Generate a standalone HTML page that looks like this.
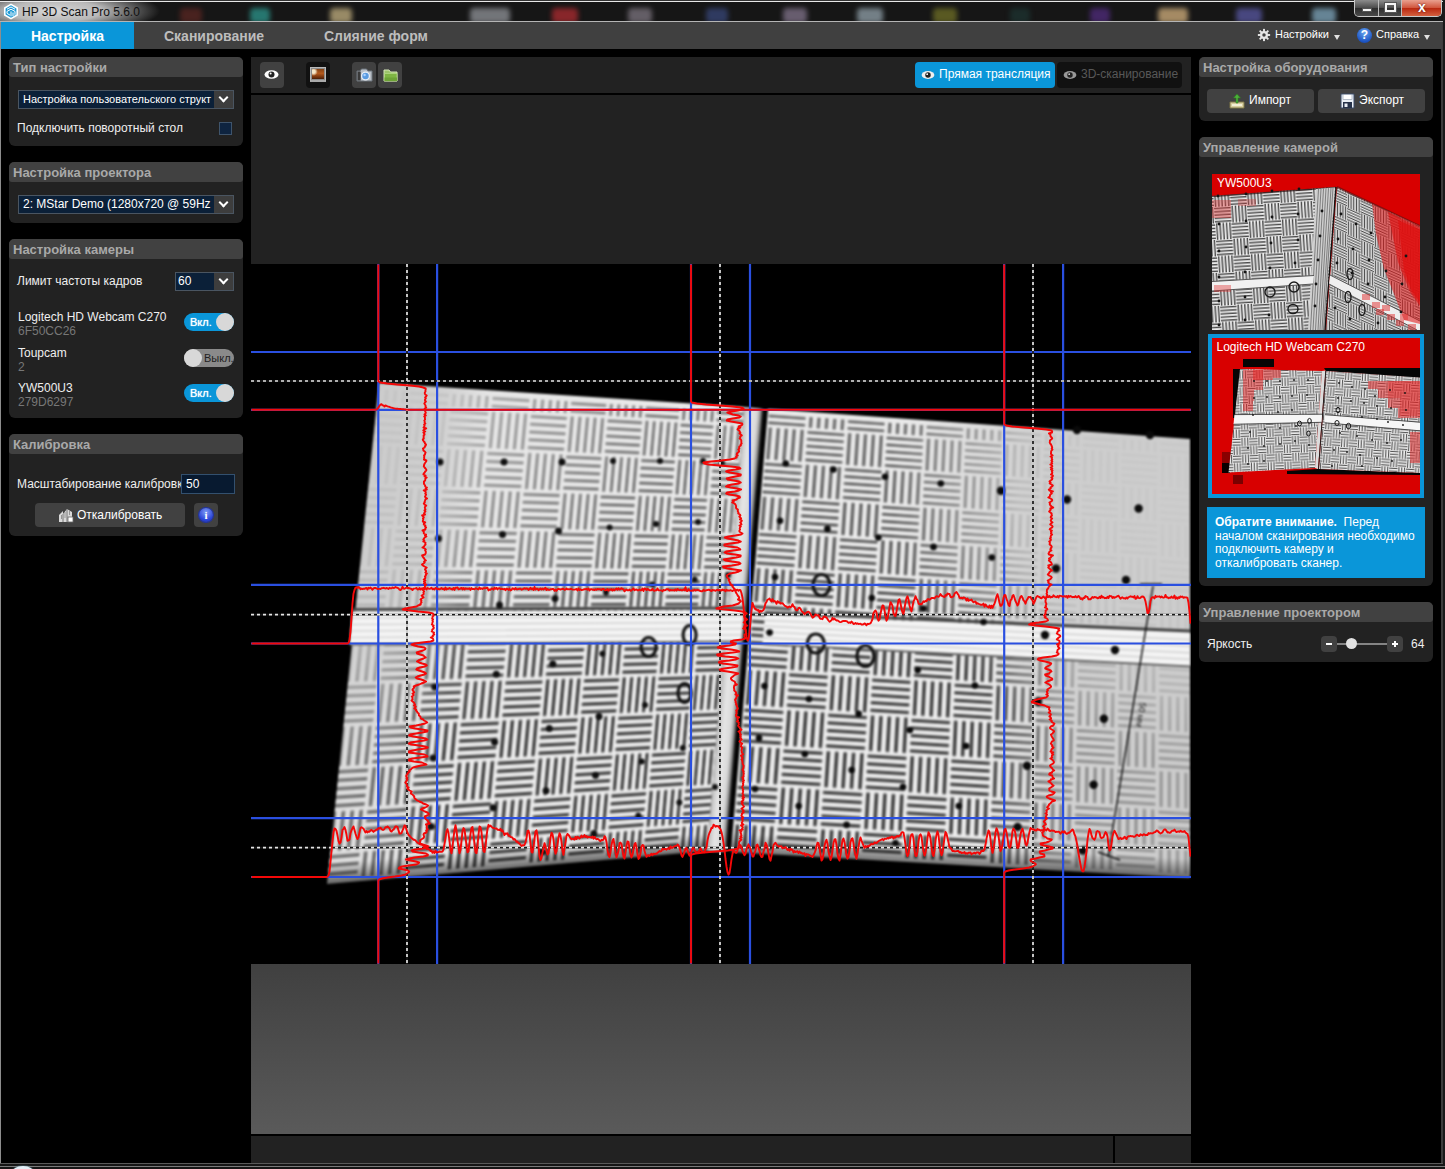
<!DOCTYPE html>
<html lang="ru"><head><meta charset="utf-8"><title>HP 3D Scan Pro 5.6.0</title>
<style>
*{box-sizing:border-box}
html,body{margin:0;padding:0;background:#000}
body{width:1445px;height:1169px;position:relative;overflow:hidden;font:12px "Liberation Sans",sans-serif;color:#eee}
.abs{position:absolute}
#title{left:0;top:0;width:1445px;height:22px;background:#161616;overflow:hidden}
#title .blob{position:absolute;top:8px;height:15px;border-radius:4px;filter:blur(2.500px);opacity:.8}
#tabs{left:1px;top:22px;width:1441px;height:27px;background:#404040}
.tab{position:absolute;top:0;height:27px;font:bold 14px/29px "Liberation Sans",sans-serif;color:#bdbdbd;white-space:nowrap}
.tab.on{background:#0a96d9;color:#fff}
.ph{position:absolute;height:20px;background:#414141;border-radius:5px 5px 3px 3px;font:bold 13px/21px "Liberation Sans",sans-serif;color:#a9a9a9;padding-left:4px;white-space:nowrap}
.pb{position:absolute;background:#222;border-radius:0 0 6px 6px}
.t{position:absolute;white-space:nowrap;line-height:14px;color:#efefef}
.g{color:#777}
.sel{position:absolute;height:19px;background:#0b2038;border:1px solid #4a5561;font-size:11px;line-height:16px;color:#fff;padding-left:4px;white-space:nowrap;overflow:hidden}
.sel .arr{position:absolute;right:0;top:0;width:19px;height:17px;background:#3d3d3d}
.sel .arr:after{content:"";position:absolute;left:6px;top:3px;width:5px;height:5px;border-right:2px solid #fff;border-bottom:2px solid #fff;transform:rotate(45deg)}
.tog{position:absolute;width:50px;height:18px;border-radius:9px;font-size:11px;line-height:18px}
.tog.on{background:#0a96d9;color:#fff;text-shadow:0 0 1px #fff}
.tog.off{background:#8a8a8a;color:#222}
.tog i{position:absolute;top:0;width:18px;height:18px;border-radius:9px;background:#d8d8d8}
.btn{position:absolute;background:#414141;border-radius:4px;color:#fff;white-space:nowrap;line-height:24px}
</style></head><body>
<!-- title bar -->
<div id="title" class="abs">
 <div class="abs" style="left:-50px;top:-12px;width:210px;height:46px;background:radial-gradient(ellipse closest-side at center,rgba(235,235,235,.9) 0%,rgba(225,225,225,.8) 45%,rgba(200,200,200,.45) 72%,rgba(128,128,128,0) 100%);"></div>
 <div class="blob" style="left:180px;width:22px;background:#6b2a25;opacity:.6"></div>
 <div class="blob" style="left:250px;width:20px;background:#2b8f86"></div>
 <div class="blob" style="left:330px;width:22px;background:#b9a77a"></div>
 <div class="blob" style="left:470px;width:40px;background:#8a8d92"></div>
 <div class="blob" style="left:552px;width:26px;background:#a52a2f"></div>
 <div class="blob" style="left:628px;width:24px;background:#77707a"></div>
 <div class="blob" style="left:706px;width:22px;background:#3a4a80;opacity:.7"></div>
 <div class="blob" style="left:783px;width:24px;background:#7c6f85"></div>
 <div class="blob" style="left:857px;width:26px;background:#8b9aa3"></div>
 <div class="blob" style="left:933px;width:24px;background:#6a6a25"></div>
 <div class="blob" style="left:1010px;width:20px;background:#1f3b38;opacity:.6"></div>
 <div class="blob" style="left:1090px;width:20px;background:#4d2a78"></div>
 <div class="blob" style="left:1158px;width:30px;background:#c9a878"></div>
 <div class="blob" style="left:1236px;width:26px;background:#55549a"></div>
 <div class="blob" style="left:1312px;width:24px;background:#7aa0b5"></div>
 <div class="abs" style="left:0;top:1px;width:1445px;height:1px;background:#e8e8e8"></div>
 <div class="abs" style="left:0;top:0;width:1445px;height:1px;background:#333"></div>
 <div class="abs" style="left:0;top:21px;width:1443px;height:1px;background:#b5b5b5"></div>
 <svg class="abs" style="left:3px;top:3px" width="16" height="17" viewBox="0 0 16 17"><path d="M8 .5 15 4.5v8L8 16.5 1 12.500v-8z" fill="#fff"/><path d="M8 2.300 13.400 5.400v6.200L8 14.700 2.600 11.600V5.400z" fill="#1c9ad6"/><path d="M4 6.200 8 4l4 2.200M4 8.400 8 6.200l4 2.200M8 8.400v5M10 9.500v3.500M12 8.400v3.400M4 8.400v2l3 1.700" stroke="#fff" stroke-width="1" fill="none"/></svg>
 <div class="t" style="left:22px;top:5px;color:#111;font-size:12px">HP 3D Scan Pro 5.6.0</div>
 <!-- window controls -->
 <div class="abs" style="left:1354px;top:0;width:88px;height:17px;border:1px solid #c9c9c9;border-top:none;border-radius:0 0 5px 5px;overflow:hidden;background:#555">
  <div class="abs" style="left:0;top:0;width:24px;height:16px;background:linear-gradient(#8c8c8c,#4a4a4a 50%,#2d2d2d 51%,#4a4a4a);border-right:1px solid #bbb"></div>
  <div class="abs" style="left:24px;top:0;width:23px;height:16px;background:linear-gradient(#8c8c8c,#4a4a4a 50%,#2d2d2d 51%,#4a4a4a);border-right:1px solid #bbb"></div>
  <div class="abs" style="left:47px;top:0;width:40px;height:16px;background:linear-gradient(#e9a08f,#d0533a 50%,#b8270f 51%,#d4603f)"></div>
  <div class="abs" style="left:7px;top:8px;width:10px;height:4px;background:#f4f4f4;border:1px solid #555"></div>
  <div class="abs" style="left:30px;top:3px;width:11px;height:9px;border:2px solid #f4f4f4;outline:1px solid #555"></div>
  <div class="abs" style="left:47px;top:-1px;width:40px;text-align:center;font:bold 14px/17px 'Liberation Sans',sans-serif;color:#fff;text-shadow:0 0 2px #400">x</div>
 </div>
</div>
<!-- window side borders -->
<div class="abs" style="left:0;top:22px;width:1px;height:1142px;background:#8d8d8d"></div>
<div class="abs" style="left:1441px;top:22px;width:2px;height:1141px;background:#3c3c3c"></div>
<div class="abs" style="left:1443px;top:0;width:2px;height:1169px;background:#1a1a1a"></div>
<div class="abs" style="left:0;top:1163px;width:1445px;height:6px;background:#161616"></div>
<div class="abs" style="left:0;top:1163px;width:1443px;height:1px;background:#5a5a5a"></div>
<div class="abs" style="left:0;top:1166px;width:1445px;height:1px;background:#7a7a7a"></div>
<div class="abs" style="left:12px;top:1166px;width:22px;height:14px;border-radius:50%;background:#e4eef6;box-shadow:0 0 2px #7ab"></div>
<!-- tab bar -->
<div id="tabs" class="abs">
 <div class="tab on" style="left:0;width:133px;text-align:center">Настройка</div>
 <div class="tab" style="left:163px">Сканирование</div>
 <div class="tab" style="left:323px">Слияние форм</div>
 <svg class="abs" style="left:1256px;top:6px" width="14" height="14" viewBox="0 0 16 16"><g fill="#e6e6e6"><circle cx="8" cy="8" r="4.600"/><g id="tt"><rect x="6.900" y="1" width="2.200" height="14"/><rect x="1" y="6.900" width="14" height="2.200"/></g><use href="#tt" transform="rotate(45 8 8)"/></g><circle cx="8" cy="8" r="2" fill="#404040"/></svg>
 <div class="t" style="left:1274px;top:5px;font-size:11px;color:#fff">Настройки</div>
 <div class="abs" style="left:1333px;top:13px;border:3.500px solid transparent;border-top:5px solid #e0e0e0;border-bottom:none"></div>
 <div class="abs" style="left:1356px;top:6px;width:15px;height:15px;border-radius:50%;background:radial-gradient(circle at 50% 30%,#6aa6ef,#1d55c4 70%,#16409a);color:#fff;font:bold 12px/15px 'Liberation Sans',sans-serif;text-align:center">?</div>
 <div class="t" style="left:1375px;top:5px;font-size:11px;color:#fff">Справка</div>
 <div class="abs" style="left:1423px;top:13px;border:3.500px solid transparent;border-top:5px solid #e0e0e0;border-bottom:none"></div>
</div>
<!-- LEFT PANELS -->
<div class="pb" style="left:9px;top:60px;width:234px;height:86px"></div>
<div class="ph" style="left:9px;top:57px;width:234px">Тип настройки</div>
<div class="sel" style="left:18px;top:90px;width:216px">Настройка пользовательского структ<span class="arr"></span></div>
<div class="t" style="left:17px;top:121px">Подключить поворотный стол</div>
<div class="abs" style="left:219px;top:122px;width:13px;height:13px;background:#0e2440;border:1px solid #3f546b"></div>

<div class="pb" style="left:9px;top:165px;width:234px;height:58px"></div>
<div class="ph" style="left:9px;top:162px;width:234px">Настройка проектора</div>
<div class="sel" style="left:18px;top:195px;width:216px;font-size:12px">2: MStar Demo (1280x720 @ 59Hz<span class="arr"></span></div>

<div class="pb" style="left:9px;top:242px;width:234px;height:176px"></div>
<div class="ph" style="left:9px;top:239px;width:234px">Настройка камеры</div>
<div class="t" style="left:17px;top:274px">Лимит частоты кадров</div>
<div class="sel" style="left:175px;top:272px;width:59px;font-size:12px;padding-left:2px">60<span class="arr"></span></div>
<div class="t" style="left:18px;top:310px">Logitech HD Webcam C270</div>
<div class="t g" style="left:18px;top:324px">6F50CC26</div>
<div class="tog on" style="left:184px;top:313px;padding-left:6px">Вкл.<i style="right:0"></i></div>
<div class="t" style="left:18px;top:346px">Toupcam</div>
<div class="t g" style="left:18px;top:360px">2</div>
<div class="tog off" style="left:184px;top:349px;padding-left:20px">Выкл.<i style="left:0"></i></div>
<div class="t" style="left:18px;top:381px">YW500U3</div>
<div class="t g" style="left:18px;top:395px">279D6297</div>
<div class="tog on" style="left:184px;top:384px;padding-left:6px">Вкл.<i style="right:0"></i></div>

<div class="pb" style="left:9px;top:437px;width:234px;height:99px"></div>
<div class="ph" style="left:9px;top:434px;width:234px">Калибровка</div>
<div class="t" style="left:17px;top:477px;width:164px;overflow:hidden">Масштабирование калибровки</div>
<div class="sel" style="left:181px;top:474px;width:54px;height:20px;font-size:12px;line-height:18px;background:#081a30;border-color:#33506e">50</div>
<div class="btn" style="left:35px;top:503px;width:150px;height:24px;padding-left:42px">Откалибровать
 <svg class="abs" style="left:22px;top:4px" width="18" height="17" viewBox="0 0 18 17"><path d="M2 15V8l4-4v3l4-5 5 3v10z" fill="#d9d9d9"/><path d="M6 7v8M10 2v13" stroke="#777" stroke-width="1"/><rect x="11" y="10" width="5" height="5" fill="#fff" stroke="#666" stroke-width=".8"/><path d="M4 9h1M4 11h1M7.500 6h1M7.500 8h1M7.500 10h1M12 5h1M12 7h1" stroke="#555" stroke-width="1.200"/></svg>
</div>
<div class="btn" style="left:194px;top:503px;width:24px;height:24px"><div class="abs" style="left:5px;top:5px;width:14px;height:14px;border-radius:50%;background:radial-gradient(circle at 50% 30%,#7f9cf5,#2a44d8 65%,#1a2ca8);color:#fff;font:bold 11px/14px 'Liberation Serif',serif;text-align:center;box-shadow:0 0 0 1px #2233a0">i</div></div>
<!-- RIGHT PANELS -->
<div class="pb" style="left:1199px;top:60px;width:234px;height:61px"></div>
<div class="ph" style="left:1199px;top:57px;width:234px">Настройка оборудования</div>
<div class="btn" style="left:1207px;top:89px;width:107px;height:24px;padding-left:42px;line-height:22px">Импорт
 <svg class="abs" style="left:22px;top:4px" width="16" height="16" viewBox="0 0 16 16"><path d="M1 9h14v6H1z" fill="#d8cfa0" stroke="#7d7446" stroke-width="1"/><path d="M8 1 4.500 5H7v5h2V5h2.500z" fill="#4caf3a" stroke="#2c7a20" stroke-width=".6"/><rect x="3" y="11" width="10" height="2" fill="#f3efd5"/></svg>
</div>
<div class="btn" style="left:1318px;top:89px;width:107px;height:24px;padding-left:41px;line-height:22px">Экспорт
 <svg class="abs" style="left:22px;top:4px" width="15" height="16" viewBox="0 0 15 16"><path d="M1 1h13v14H1z" fill="#e9eef5" stroke="#3a4a66" stroke-width="1"/><rect x="3" y="1.500" width="9" height="5" fill="#fff" stroke="#8894a8" stroke-width=".6"/><rect x="3" y="9" width="9" height="6" fill="#26324a"/><rect x="4.500" y="10.500" width="3" height="3.500" fill="#e9eef5"/></svg>
</div>

<div class="pb" style="left:1199px;top:140px;width:234px;height:446px"></div>
<div class="ph" style="left:1199px;top:137px;width:234px">Управление камерой</div>
<svg class="abs" style="left:1212px;top:174px" width="208" height="156" viewBox="0 0 208 156"><defs>
<pattern id="t1a" patternUnits="userSpaceOnUse" width="33.0" height="33.0" patternTransform="rotate(-3.5)"><rect width="33.0" height="33.0" fill="#ececec"/><g fill="#4a4a4a"><rect x="0" y="0.92" width="16.5" height="1.45"/><rect x="16.5" y="17.43" width="16.5" height="1.45"/><rect x="17.43" y="0" width="1.45" height="16.5"/><rect x="0.92" y="16.5" width="1.45" height="16.5"/><rect x="0" y="4.22" width="16.5" height="1.45"/><rect x="16.5" y="20.73" width="16.5" height="1.45"/><rect x="20.73" y="0" width="1.45" height="16.5"/><rect x="4.22" y="16.5" width="1.45" height="16.5"/><rect x="0" y="7.52" width="16.5" height="1.45"/><rect x="16.5" y="24.02" width="16.5" height="1.45"/><rect x="24.02" y="0" width="1.45" height="16.5"/><rect x="7.52" y="16.5" width="1.45" height="16.5"/><rect x="0" y="10.82" width="16.5" height="1.45"/><rect x="16.5" y="27.32" width="16.5" height="1.45"/><rect x="27.32" y="0" width="1.45" height="16.5"/><rect x="10.82" y="16.5" width="1.45" height="16.5"/><rect x="0" y="14.12" width="16.5" height="1.45"/><rect x="16.5" y="30.62" width="16.5" height="1.45"/><rect x="30.62" y="0" width="1.45" height="16.5"/><rect x="14.12" y="16.5" width="1.45" height="16.5"/></g></pattern>
<pattern id="t1b" patternUnits="userSpaceOnUse" width="27.0" height="27.0" patternTransform="skewY(24)"><rect width="27.0" height="27.0" fill="#ececec"/><g fill="#4a4a4a"><rect x="0" y="0.75" width="13.5" height="1.2"/><rect x="13.5" y="14.25" width="13.5" height="1.2"/><rect x="14.25" y="0" width="1.2" height="13.5"/><rect x="0.75" y="13.5" width="1.2" height="13.5"/><rect x="0" y="3.45" width="13.5" height="1.2"/><rect x="13.5" y="16.95" width="13.5" height="1.2"/><rect x="16.95" y="0" width="1.2" height="13.5"/><rect x="3.45" y="13.5" width="1.2" height="13.5"/><rect x="0" y="6.15" width="13.5" height="1.2"/><rect x="13.5" y="19.65" width="13.5" height="1.2"/><rect x="19.65" y="0" width="1.2" height="13.5"/><rect x="6.15" y="13.5" width="1.2" height="13.5"/><rect x="0" y="8.85" width="13.5" height="1.2"/><rect x="13.5" y="22.35" width="13.5" height="1.2"/><rect x="22.35" y="0" width="1.2" height="13.5"/><rect x="8.85" y="13.5" width="1.2" height="13.5"/><rect x="0" y="11.55" width="13.5" height="1.2"/><rect x="13.5" y="25.05" width="13.5" height="1.2"/><rect x="25.05" y="0" width="1.2" height="13.5"/><rect x="11.55" y="13.5" width="1.2" height="13.5"/></g></pattern>
</defs>
<rect width="208" height="156" fill="#d80000"/>
<polygon points="0,22 124,13 113,156 0,156" fill="url(#t1a)"/>
<polygon points="125,13 208,52 208,156 114,156" fill="url(#t1b)"/>
<path d="M0 22.500 124 13.500" stroke="#2b1010" stroke-width="1.500" opacity=".7"/><path d="M125 13 208 52" stroke="#5a1010" stroke-width="2" opacity=".6"/>
<polygon points="104,15 123,13.500 112,156 96,156" fill="#cfcfcf"/><path d="M106.500 15 98.500 156M109 15 101 156M111.500 14.700 103.500 156M114 14.500 106 156M116.500 14.200 108 156M119 14 110 156M121 14 111.500 156" stroke="#6a6a6a" stroke-width=".8"/>
<path d="M124 13 113 156" stroke="#111" stroke-width="1.300"/>
<polygon points="0,107.500 102,101.500 101,110 0,117" fill="#f1f1f1"/><path d="M0 107.500 102 101.500M0 117 101 110" stroke="#555" stroke-width="1"/>
<polygon points="118,101 208,147 208,156 205,156 117,110" fill="#eee"/><path d="M118 101 208 147M117 110 205 156" stroke="#555" stroke-width="1"/>
<polygon points="160,30 208,52 208,150 192,146 182,120 172,95 164,60" fill="#e01010" opacity=".55"/>
<polygon points="176,38 208,54 208,132 198,118 186,88" fill="#e01010" opacity=".62"/>
<polygon points="186,46 208,56 208,128 200,118 192,96" fill="#e01010" opacity=".7"/>
<rect x="0" y="26" width="19" height="18" fill="#e03030" opacity=".4"/><rect x="26" y="25" width="18" height="7" fill="#e03030" opacity=".3"/><rect x="2" y="111" width="17" height="7" fill="#e03030" opacity=".4"/>
<rect x="150" y="120" width="8" height="6" fill="#e03030" opacity=".5"/>
<rect x="160" y="128" width="8" height="6" fill="#e03030" opacity=".5"/>
<rect x="164" y="135" width="8" height="6" fill="#e03030" opacity=".5"/>
<rect x="175" y="140" width="8" height="6" fill="#e03030" opacity=".5"/>
<rect x="184" y="146" width="8" height="6" fill="#e03030" opacity=".5"/>
<rect x="196" y="150" width="8" height="6" fill="#e03030" opacity=".5"/>
<rect x="170" y="131" width="8" height="6" fill="#e03030" opacity=".5"/>
<rect x="188" y="140" width="8" height="6" fill="#e03030" opacity=".5"/>
<circle cx="6" cy="22" r="1.400" fill="#151515"/>
<circle cx="34" cy="20" r="1.400" fill="#151515"/>
<circle cx="60" cy="17" r="1.400" fill="#151515"/>
<circle cx="87" cy="15" r="1.400" fill="#151515"/>
<circle cx="7" cy="50" r="1.400" fill="#151515"/>
<circle cx="34" cy="47" r="1.400" fill="#151515"/>
<circle cx="60" cy="43" r="1.400" fill="#151515"/>
<circle cx="86" cy="40" r="1.400" fill="#151515"/>
<circle cx="7" cy="77" r="1.400" fill="#151515"/>
<circle cx="34" cy="73" r="1.400" fill="#151515"/>
<circle cx="59" cy="69" r="1.400" fill="#151515"/>
<circle cx="86" cy="66" r="1.400" fill="#151515"/>
<circle cx="7" cy="103" r="1.400" fill="#151515"/>
<circle cx="33" cy="98" r="1.400" fill="#151515"/>
<circle cx="58" cy="94" r="1.400" fill="#151515"/>
<circle cx="83" cy="89" r="1.400" fill="#151515"/>
<circle cx="7" cy="127" r="1.400" fill="#151515"/>
<circle cx="33" cy="123" r="1.400" fill="#151515"/>
<circle cx="7" cy="151" r="1.400" fill="#151515"/>
<circle cx="33" cy="146" r="1.400" fill="#151515"/>
<circle cx="57" cy="141" r="1.400" fill="#151515"/>
<circle cx="110" cy="37" r="1.400" fill="#151515"/>
<circle cx="108" cy="62" r="1.400" fill="#151515"/>
<circle cx="106" cy="86" r="1.400" fill="#151515"/>
<circle cx="104" cy="110" r="1.400" fill="#151515"/>
<circle cx="103" cy="132" r="1.400" fill="#151515"/>
<circle cx="129" cy="40" r="1.400" fill="#151515"/>
<circle cx="144" cy="50" r="1.400" fill="#151515"/>
<circle cx="159" cy="59" r="1.400" fill="#151515"/>
<circle cx="126" cy="65" r="1.400" fill="#151515"/>
<circle cx="141" cy="75" r="1.400" fill="#151515"/>
<circle cx="157" cy="86" r="1.400" fill="#151515"/>
<circle cx="174" cy="97" r="1.400" fill="#151515"/>
<circle cx="194" cy="82" r="1.400" fill="#151515"/>
<circle cx="125" cy="89" r="1.400" fill="#151515"/>
<circle cx="140" cy="99" r="1.400" fill="#151515"/>
<circle cx="156" cy="110" r="1.400" fill="#151515"/>
<circle cx="173" cy="123" r="1.400" fill="#151515"/>
<circle cx="190" cy="110" r="1.400" fill="#151515"/>
<circle cx="123" cy="134" r="1.400" fill="#151515"/>
<circle cx="138" cy="145" r="1.400" fill="#151515"/>
<circle cx="166" cy="149" r="1.400" fill="#151515"/>
<circle cx="189" cy="138" r="1.400" fill="#151515"/>
<ellipse cx="58" cy="118" rx="5" ry="5" fill="none" stroke="#1a1a1a" stroke-width="1.400"/>
<ellipse cx="82" cy="113" rx="5" ry="5" fill="none" stroke="#1a1a1a" stroke-width="1.400"/>
<ellipse cx="81" cy="135" rx="5" ry="4.5" fill="none" stroke="#1a1a1a" stroke-width="1.400"/>
<ellipse cx="138" cy="100" rx="3" ry="5.5" fill="none" stroke="#1a1a1a" stroke-width="1.400"/>
<ellipse cx="136" cy="123" rx="3" ry="5.5" fill="none" stroke="#1a1a1a" stroke-width="1.400"/>
<ellipse cx="150" cy="136" rx="3" ry="5.5" fill="none" stroke="#1a1a1a" stroke-width="1.400"/>
<text x="5" y="13" font-family="Liberation Sans, sans-serif" font-size="12" fill="#fff">YW500U3</text></svg>
<div class="abs" style="left:1208px;top:334px;width:216px;height:164px;background:#0a96d9"></div>
<svg class="abs" style="left:1212px;top:338px" width="208" height="156" viewBox="0 0 208 156"><defs>
<pattern id="t2a" patternUnits="userSpaceOnUse" width="16.8" height="16.8" patternTransform="rotate(-2)"><rect width="16.8" height="16.8" fill="#ececec"/><g fill="#505050"><rect x="0" y="0.88" width="8.4" height="1.05"/><rect x="8.4" y="9.28" width="8.4" height="1.05"/><rect x="9.28" y="0" width="1.05" height="8.4"/><rect x="0.88" y="8.4" width="1.05" height="8.4"/><rect x="0" y="3.68" width="8.4" height="1.05"/><rect x="8.4" y="12.08" width="8.4" height="1.05"/><rect x="12.08" y="0" width="1.05" height="8.4"/><rect x="3.68" y="8.4" width="1.05" height="8.4"/><rect x="0" y="6.48" width="8.4" height="1.05"/><rect x="8.4" y="14.88" width="8.4" height="1.05"/><rect x="14.88" y="0" width="1.05" height="8.4"/><rect x="6.48" y="8.4" width="1.05" height="8.4"/></g></pattern>
<pattern id="t2b" patternUnits="userSpaceOnUse" width="16.8" height="16.8" patternTransform="rotate(3.5)"><rect width="16.8" height="16.8" fill="#ececec"/><g fill="#505050"><rect x="0" y="0.88" width="8.4" height="1.05"/><rect x="8.4" y="9.28" width="8.4" height="1.05"/><rect x="9.28" y="0" width="1.05" height="8.4"/><rect x="0.88" y="8.4" width="1.05" height="8.4"/><rect x="0" y="3.68" width="8.4" height="1.05"/><rect x="8.4" y="12.08" width="8.4" height="1.05"/><rect x="12.08" y="0" width="1.05" height="8.4"/><rect x="3.68" y="8.4" width="1.05" height="8.4"/><rect x="0" y="6.48" width="8.4" height="1.05"/><rect x="8.4" y="14.88" width="8.4" height="1.05"/><rect x="14.88" y="0" width="1.05" height="8.4"/><rect x="6.48" y="8.4" width="1.05" height="8.4"/></g></pattern>
</defs>
<rect width="208" height="156" fill="#d80000"/>
<rect x="31" y="21" width="31" height="8" fill="#050505"/><polygon points="21,31 29,31 24,80 21,80" fill="#050505"/><polygon points="112,30 208,30 208,40 114,33" fill="#050505"/><polygon points="75,133 106,131 208,135 208,137 75,136" fill="#050505"/>
<rect x="10" y="114" width="9" height="11" fill="#8a0000"/><rect x="10" y="125" width="8" height="10" fill="#0a0000"/><rect x="21" y="137" width="10" height="9" fill="#7a0000"/>
<polygon points="28,31 110,33 103,130 16.500,134.500" fill="url(#t2a)"/>
<polygon points="110,33 113.500,32.500 106,131 103,130" fill="#dcdcdc"/>
<polygon points="114,33 208,39.500 208,135 107,131" fill="url(#t2b)"/>
<path d="M113.800 32.500 106.500 131" stroke="#222" stroke-width="1"/>
<polygon points="22.500,77 110,76.500 109.500,84 21.500,86" fill="#f6f6f6"/><path d="M22.500 76.600 110 76.200M21.500 86.300 109.500 84.300" stroke="#444" stroke-width=".9"/>
<polygon points="113,77 208,84.500 208,92.500 112.500,84.500" fill="#f6f6f6"/><path d="M113 76.700 208 84.200M112.500 84.800 208 92.800" stroke="#444" stroke-width=".9"/>
<rect x="31" y="32" width="30" height="10" fill="#e82020" opacity="0.5"/><rect x="31" y="42" width="20" height="10" fill="#e82020" opacity="0.5"/><rect x="31" y="52" width="11" height="11" fill="#e82020" opacity="0.5"/><rect x="31" y="63" width="10" height="10" fill="#e82020" opacity="0.5"/><rect x="41" y="32" width="10" height="10" fill="#e82020" opacity="0.5"/><rect x="61" y="32" width="8" height="8" fill="#e82020" opacity="0.5"/>
<rect x="156" y="43" width="52" height="8" fill="#e82020" opacity="0.5"/><rect x="166" y="51" width="42" height="9" fill="#e82020" opacity="0.5"/><rect x="176" y="60" width="32" height="10" fill="#e82020" opacity="0.5"/><rect x="186" y="70" width="22" height="10" fill="#e82020" opacity="0.5"/><rect x="198" y="94" width="10" height="31" fill="#e82020" opacity="0.5"/>
<rect x="176" y="43" width="32" height="17" fill="#e82020" opacity="0.3"/><rect x="188" y="60" width="20" height="18" fill="#e82020" opacity="0.3"/>
<circle cx="42" cy="43" r=".9" fill="#151515"/>
<circle cx="55" cy="43" r=".9" fill="#151515"/>
<circle cx="68" cy="43" r=".9" fill="#151515"/>
<circle cx="82" cy="42" r=".9" fill="#151515"/>
<circle cx="96" cy="42" r=".9" fill="#151515"/>
<circle cx="42" cy="60" r=".9" fill="#151515"/>
<circle cx="55" cy="59" r=".9" fill="#151515"/>
<circle cx="68" cy="59" r=".9" fill="#151515"/>
<circle cx="80" cy="58" r=".9" fill="#151515"/>
<circle cx="95" cy="57" r=".9" fill="#151515"/>
<circle cx="41" cy="77" r=".9" fill="#151515"/>
<circle cx="66" cy="74" r=".9" fill="#151515"/>
<circle cx="80" cy="72" r=".9" fill="#151515"/>
<circle cx="38" cy="94" r=".9" fill="#151515"/>
<circle cx="53" cy="91" r=".9" fill="#151515"/>
<circle cx="68" cy="90" r=".9" fill="#151515"/>
<circle cx="84" cy="88" r=".9" fill="#151515"/>
<circle cx="36" cy="110" r=".9" fill="#151515"/>
<circle cx="52" cy="108" r=".9" fill="#151515"/>
<circle cx="68" cy="106" r=".9" fill="#151515"/>
<circle cx="83" cy="103" r=".9" fill="#151515"/>
<circle cx="36" cy="126" r=".9" fill="#151515"/>
<circle cx="52" cy="123" r=".9" fill="#151515"/>
<circle cx="97" cy="107" r=".9" fill="#151515"/>
<circle cx="127" cy="45" r=".9" fill="#151515"/>
<circle cx="140" cy="49" r=".9" fill="#151515"/>
<circle cx="153" cy="51" r=".9" fill="#151515"/>
<circle cx="163" cy="58" r=".9" fill="#151515"/>
<circle cx="178" cy="52" r=".9" fill="#151515"/>
<circle cx="193" cy="55" r=".9" fill="#151515"/>
<circle cx="126" cy="60" r=".9" fill="#151515"/>
<circle cx="139" cy="63" r=".9" fill="#151515"/>
<circle cx="152" cy="65" r=".9" fill="#151515"/>
<circle cx="165" cy="68" r=".9" fill="#151515"/>
<circle cx="179" cy="70" r=".9" fill="#151515"/>
<circle cx="194" cy="72" r=".9" fill="#151515"/>
<circle cx="150" cy="79" r=".9" fill="#151515"/>
<circle cx="165" cy="81" r=".9" fill="#151515"/>
<circle cx="176" cy="84" r=".9" fill="#151515"/>
<circle cx="191" cy="87" r=".9" fill="#151515"/>
<circle cx="128" cy="95" r=".9" fill="#151515"/>
<circle cx="145" cy="98" r=".9" fill="#151515"/>
<circle cx="160" cy="102" r=".9" fill="#151515"/>
<circle cx="175" cy="105" r=".9" fill="#151515"/>
<circle cx="189" cy="102" r=".9" fill="#151515"/>
<circle cx="122" cy="112" r=".9" fill="#151515"/>
<circle cx="135" cy="114" r=".9" fill="#151515"/>
<circle cx="148" cy="117" r=".9" fill="#151515"/>
<circle cx="165" cy="120" r=".9" fill="#151515"/>
<circle cx="180" cy="123" r=".9" fill="#151515"/>
<circle cx="120" cy="128" r=".9" fill="#151515"/>
<circle cx="150" cy="128" r=".9" fill="#151515"/>
<ellipse cx="87.5" cy="85.5" rx="2" ry="2.4" fill="none" stroke="#1a1a1a" stroke-width="1"/>
<ellipse cx="97.5" cy="83" rx="1.8" ry="2.6" fill="none" stroke="#1a1a1a" stroke-width="1"/>
<ellipse cx="96.5" cy="95.5" rx="1.8" ry="2.4" fill="none" stroke="#1a1a1a" stroke-width="1"/>
<ellipse cx="126" cy="72" rx="2" ry="2.7" fill="none" stroke="#1a1a1a" stroke-width="1"/>
<ellipse cx="125" cy="85" rx="2.1" ry="2.5" fill="none" stroke="#1a1a1a" stroke-width="1"/>
<ellipse cx="136.5" cy="88" rx="2.2" ry="2.7" fill="none" stroke="#1a1a1a" stroke-width="1"/>
<text x="4.500" y="13" font-family="Liberation Sans, sans-serif" font-size="12" fill="#fff">Logitech HD Webcam C270</text></svg>
<div class="abs" style="left:1207px;top:507px;width:218px;height:71px;background:#0a96d9;color:#fff;padding:9px 0 0 8px;line-height:13.700px;font-size:12px"><b>Обратите внимание.</b>&nbsp; Перед<br>началом сканирования необходимо<br>подключить камеру и<br>откалибровать сканер.</div>

<div class="pb" style="left:1199px;top:605px;width:234px;height:57px"></div>
<div class="ph" style="left:1199px;top:602px;width:234px">Управление проектором</div>
<div class="t" style="left:1207px;top:637px">Яркость</div>
<div class="abs" style="left:1336px;top:643px;width:52px;height:2px;background:#858585"></div>
<div class="abs" style="left:1321px;top:636px;width:16px;height:16px;border-radius:4px;background:#414141"><div class="abs" style="left:5px;top:7px;width:6px;height:2px;background:#fff"></div></div>
<div class="abs" style="left:1387px;top:636px;width:16px;height:16px;border-radius:4px;background:#414141"><div class="abs" style="left:5px;top:7px;width:6px;height:2px;background:#fff"></div><div class="abs" style="left:7px;top:5px;width:2px;height:6px;background:#fff"></div></div>
<div class="abs" style="left:1346px;top:638px;width:11px;height:11px;border-radius:50%;background:#e2e2e2"></div>
<div class="t" style="left:1411px;top:637px">64</div>

<!-- CENTER -->
<div class="abs" style="left:251px;top:57px;width:940px;height:36px;background:#222"></div>
<div class="abs" style="left:251px;top:95px;width:940px;height:169px;background:#222"></div>
<div class="btn" style="left:260px;top:62px;width:24px;height:26px"><svg class="abs" style="left:4px;top:7px" width="15" height="11" viewBox="0 0 15 11"><ellipse cx="7.500" cy="5.500" rx="7" ry="4.300" fill="#fff"/><circle cx="7.500" cy="5.500" r="3" fill="#222"/><circle cx="6.600" cy="4.600" r="1" fill="#fff"/></svg></div>
<div class="btn" style="left:306px;top:62px;width:24px;height:26px;background:#111"><div class="abs" style="left:4px;top:5px;width:16px;height:15px;background:radial-gradient(circle at 18% 30%,#f3e6c8 0,#f3e6c8 12%,rgba(200,120,50,0) 30%),linear-gradient(180deg,#7a3d12,#b3591c 45%,#6a2d0a 80%,#2a1206);border:1px solid #b9b9b9;border-bottom:2px solid #a9a9a9;box-shadow:0 0 0 1px #8a8a8a inset"></div></div>
<div class="btn" style="left:352px;top:62px;width:24px;height:26px"><svg class="abs" style="left:4px;top:6px" width="17" height="14" viewBox="0 0 17 14"><path d="M1 3h3l1.500-2h5L12 3h4v10H1z" fill="#b9bfc6" stroke="#6d747c" stroke-width="1"/><rect x="1.500" y="3.500" width="3.200" height="9" fill="#3a3a3a"/><circle cx="9.500" cy="8" r="3.900" fill="#5a9be0" stroke="#e8eef5" stroke-width="1.300"/><circle cx="8.600" cy="7" r="1.200" fill="#a9d0ff"/></svg></div>
<div class="btn" style="left:378px;top:62px;width:24px;height:26px"><svg class="abs" style="left:4px;top:6px" width="17" height="14" viewBox="0 0 17 14"><path d="M2 13V2h5l1.500 2H15v9z" fill="#9cc56a" stroke="#d5e6b8" stroke-width="1"/><path d="M2.500 13V5.500h12.500V13z" fill="#7fb544" stroke="#b9dc8c" stroke-width=".7"/><path d="M2.500 9.500h12.500V13H2.500z" fill="#6da336"/></svg></div>
<div class="btn" style="left:915px;top:62px;width:140px;height:26px;background:#0a96d9;line-height:25px;padding-left:24px">Прямая трансляция<svg class="abs" style="left:6px;top:8px" width="14" height="10" viewBox="0 0 15 11"><ellipse cx="7.500" cy="5.500" rx="7" ry="4.300" fill="#eee"/><circle cx="7.500" cy="5.500" r="3" fill="#222"/><circle cx="6.600" cy="4.600" r="1" fill="#fff"/></svg></div>
<div class="btn" style="left:1057px;top:62px;width:125px;height:26px;background:#111;color:#585858;line-height:25px;padding-left:24px">3D-сканирование<svg class="abs" style="left:6px;top:8px" width="14" height="10" viewBox="0 0 15 11"><ellipse cx="7.500" cy="5.500" rx="7" ry="4.300" fill="#999"/><circle cx="7.500" cy="5.500" r="3" fill="#222"/><circle cx="6.600" cy="4.600" r="1" fill="#ccc"/></svg></div>
<!-- camera view -->
<div class="abs" style="left:251px;top:264px;width:940px;height:700px;background:#000;overflow:hidden">
<div style="position:absolute;left:0;top:0;width:940px;height:700px;filter:blur(.8px)">
<div style="position:absolute;left:0;top:0;width:380px;height:480px;transform-origin:0 0;transform:matrix3d(1.1244604,0.11070877,0,0.00033252359,-0.1126353,1.008655,0,-5.6604816e-05,0,0,1,0,128,119,0,1);background:#ececec;overflow:hidden"><svg width="380" height="480" style="position:absolute;left:0;top:0"><defs><pattern id="La" patternUnits="userSpaceOnUse" x="-52.0" y="-20.0" width="80" height="80"><g fill="#363636"><rect x="1.5" y="2.4" width="37" height="3.200"/><rect x="1.5" y="10.4" width="37" height="3.200"/><rect x="1.5" y="18.4" width="37" height="3.200"/><rect x="1.5" y="26.4" width="37" height="3.200"/><rect x="1.5" y="34.4" width="37" height="3.200"/><rect x="42.4" y="1.5" width="3.200" height="37"/><rect x="50.4" y="1.5" width="3.200" height="37"/><rect x="58.4" y="1.5" width="3.200" height="37"/><rect x="66.4" y="1.5" width="3.200" height="37"/><rect x="74.4" y="1.5" width="3.200" height="37"/><rect x="2.4" y="41.5" width="3.200" height="37"/><rect x="10.4" y="41.5" width="3.200" height="37"/><rect x="18.4" y="41.5" width="3.200" height="37"/><rect x="26.4" y="41.5" width="3.200" height="37"/><rect x="34.4" y="41.5" width="3.200" height="37"/><rect x="41.5" y="42.4" width="37" height="3.200"/><rect x="41.5" y="50.4" width="37" height="3.200"/><rect x="41.5" y="58.4" width="37" height="3.200"/><rect x="41.5" y="66.4" width="37" height="3.200"/><rect x="41.5" y="74.4" width="37" height="3.200"/></g></pattern><pattern id="Lb" patternUnits="userSpaceOnUse" x="-52.0" y="250.8" width="80" height="80"><g fill="#363636"><rect x="1.5" y="2.4" width="37" height="3.200"/><rect x="1.5" y="10.4" width="37" height="3.200"/><rect x="1.5" y="18.4" width="37" height="3.200"/><rect x="1.5" y="26.4" width="37" height="3.200"/><rect x="1.5" y="34.4" width="37" height="3.200"/><rect x="42.4" y="1.5" width="3.200" height="37"/><rect x="50.4" y="1.5" width="3.200" height="37"/><rect x="58.4" y="1.5" width="3.200" height="37"/><rect x="66.4" y="1.5" width="3.200" height="37"/><rect x="74.4" y="1.5" width="3.200" height="37"/><rect x="2.4" y="41.5" width="3.200" height="37"/><rect x="10.4" y="41.5" width="3.200" height="37"/><rect x="18.4" y="41.5" width="3.200" height="37"/><rect x="26.4" y="41.5" width="3.200" height="37"/><rect x="34.4" y="41.5" width="3.200" height="37"/><rect x="41.5" y="42.4" width="37" height="3.200"/><rect x="41.5" y="50.4" width="37" height="3.200"/><rect x="41.5" y="58.4" width="37" height="3.200"/><rect x="41.5" y="66.4" width="37" height="3.200"/><rect x="41.5" y="74.4" width="37" height="3.200"/></g></pattern></defs><rect x="0" y="6.0" width="380" height="244.8" fill="url(#La)"/><rect x="0" y="250.8" width="380" height="225.2" fill="url(#Lb)"/></svg><div style="position:absolute;left:0;top:0;width:100%;height:100%;background:linear-gradient(180deg,rgba(0,0,0,0) 96%,rgba(0,0,0,.55) 100%),linear-gradient(90deg,rgba(200,200,200,.38) 0,rgba(200,200,200,.3) 13%,rgba(205,205,205,0) 25%),radial-gradient(ellipse 27% 72% at 2% 10%,rgba(200,200,200,.8) 0,rgba(203,203,203,.68) 55%,rgba(205,205,205,0) 100%),radial-gradient(ellipse at 12% 0%,rgba(225,225,225,.6),rgba(225,225,225,.25) 30%,rgba(225,225,225,0) 55%),linear-gradient(180deg,rgba(230,230,230,.38) 0,rgba(230,230,230,.25) 35%,rgba(230,230,230,0) 55%)"></div></div>
<div style="position:absolute;left:0;top:0;width:22px;height:480px;transform-origin:0 0;transform:matrix3d(1.0526423,0.10573072,0,0.00010221813,-0.073490366,0.92962516,0,7.8793145e-06,0,0,1,0,493,143,0,1);background:linear-gradient(90deg,#bdbdbd,#e6e6e6 30%,#d8d8d8 62%,#8a8a8a 78%,#0a0a0a 88%,#000 100%)"></div>
<div style="position:absolute;left:0;top:0;width:432px;height:480px;transform-origin:0 0;transform:matrix3d(1.0070342,0.075069474,0,3.2143026e-05,-0.15769336,0.82416939,0,-0.00016793755,0,0,1,0,517,145,0,1);background:#ececec;overflow:hidden"><svg width="432" height="480" style="position:absolute;left:0;top:0"><defs><pattern id="Ra" patternUnits="userSpaceOnUse" x="0.0" y="-20.0" width="80" height="80"><g fill="#363636"><rect x="1.5" y="2.4" width="37" height="3.200"/><rect x="1.5" y="10.4" width="37" height="3.200"/><rect x="1.5" y="18.4" width="37" height="3.200"/><rect x="1.5" y="26.4" width="37" height="3.200"/><rect x="1.5" y="34.4" width="37" height="3.200"/><rect x="42.4" y="1.5" width="3.200" height="37"/><rect x="50.4" y="1.5" width="3.200" height="37"/><rect x="58.4" y="1.5" width="3.200" height="37"/><rect x="66.4" y="1.5" width="3.200" height="37"/><rect x="74.4" y="1.5" width="3.200" height="37"/><rect x="2.4" y="41.5" width="3.200" height="37"/><rect x="10.4" y="41.5" width="3.200" height="37"/><rect x="18.4" y="41.5" width="3.200" height="37"/><rect x="26.4" y="41.5" width="3.200" height="37"/><rect x="34.4" y="41.5" width="3.200" height="37"/><rect x="41.5" y="42.4" width="37" height="3.200"/><rect x="41.5" y="50.4" width="37" height="3.200"/><rect x="41.5" y="58.4" width="37" height="3.200"/><rect x="41.5" y="66.4" width="37" height="3.200"/><rect x="41.5" y="74.4" width="37" height="3.200"/></g></pattern><pattern id="Rb" patternUnits="userSpaceOnUse" x="0.0" y="250.8" width="80" height="80"><g fill="#363636"><rect x="1.5" y="2.4" width="37" height="3.200"/><rect x="1.5" y="10.4" width="37" height="3.200"/><rect x="1.5" y="18.4" width="37" height="3.200"/><rect x="1.5" y="26.4" width="37" height="3.200"/><rect x="1.5" y="34.4" width="37" height="3.200"/><rect x="42.4" y="1.5" width="3.200" height="37"/><rect x="50.4" y="1.5" width="3.200" height="37"/><rect x="58.4" y="1.5" width="3.200" height="37"/><rect x="66.4" y="1.5" width="3.200" height="37"/><rect x="74.4" y="1.5" width="3.200" height="37"/><rect x="2.4" y="41.5" width="3.200" height="37"/><rect x="10.4" y="41.5" width="3.200" height="37"/><rect x="18.4" y="41.5" width="3.200" height="37"/><rect x="26.4" y="41.5" width="3.200" height="37"/><rect x="34.4" y="41.5" width="3.200" height="37"/><rect x="41.5" y="42.4" width="37" height="3.200"/><rect x="41.5" y="50.4" width="37" height="3.200"/><rect x="41.5" y="58.4" width="37" height="3.200"/><rect x="41.5" y="66.4" width="37" height="3.200"/><rect x="41.5" y="74.4" width="37" height="3.200"/></g></pattern></defs><rect x="0" y="6.0" width="432" height="244.8" fill="url(#Ra)"/><rect x="0" y="250.8" width="432" height="225.2" fill="url(#Rb)"/></svg><div style="position:absolute;left:0;top:0;width:100%;height:100%;background:linear-gradient(180deg,rgba(0,0,0,0) 96%,rgba(0,0,0,.5) 100%),radial-gradient(ellipse at 100% 15%,rgba(205,205,205,.9) 0,rgba(205,205,205,.8) 28%,rgba(200,200,200,0) 50%),linear-gradient(90deg,rgba(195,195,195,0) 0,rgba(195,195,195,0) 54%,rgba(195,195,195,.3) 62%,rgba(195,195,195,.6) 72%,rgba(192,192,192,.74) 100%),linear-gradient(180deg,rgba(230,230,230,.3) 0,rgba(230,230,230,.18) 35%,rgba(230,230,230,0) 55%)"></div></div>
<svg width="940" height="700" style="position:absolute;left:0;top:0"><polygon points="101.0,347.5 493.0,346.0 490.0,377.0 98.5,380.0" fill="#f3f3f3"/><path d="M100.5 354.0L492.4 352.2M100.0 360.5L491.8 358.4M99.5 367.0L491.2 364.6M99.0 373.5L490.6 370.8" stroke="#cdcdcd" stroke-width="1.200" fill="none"/><path d="M101.0 345.5L493.0 344.0" stroke="#454545" stroke-width="3.200" fill="none"/><path d="M98.5 380.5L490.0 377.5" stroke="#666" stroke-width="2" fill="none"/><polygon points="514.0,350.5 939.5,369.0 939.5,402.0 511.5,379.5" fill="#f3f3f3"/><path d="M513.5 356.3L939.5 375.6M513.0 362.1L939.5 382.2M512.5 367.9L939.5 388.8M512.0 373.7L939.5 395.4" stroke="#cdcdcd" stroke-width="1.200" fill="none"/><path d="M514.0 348.5L939.5 367.0" stroke="#454545" stroke-width="3.200" fill="none"/><path d="M511.5 380.0L939.5 402.5" stroke="#666" stroke-width="2" fill="none"/><circle cx="189.0" cy="198.0" r="3.5" fill="#101010"/><circle cx="253.0" cy="198.0" r="3.5" fill="#101010"/><circle cx="311.0" cy="198.0" r="3.5" fill="#101010"/><circle cx="362.0" cy="197.0" r="3.0" fill="#101010"/><circle cx="409.0" cy="197.0" r="3.0" fill="#101010"/><circle cx="452.0" cy="197.0" r="3.0" fill="#101010"/><circle cx="187.5" cy="274.5" r="3.5" fill="#101010"/><circle cx="251.5" cy="270.5" r="3.5" fill="#101010"/><circle cx="307.5" cy="267.0" r="3.5" fill="#101010"/><circle cx="358.6" cy="263.5" r="3.0" fill="#101010"/><circle cx="405.0" cy="260.0" r="3.0" fill="#101010"/><circle cx="447.0" cy="258.0" r="3.0" fill="#101010"/><circle cx="248.5" cy="341.0" r="3.5" fill="#101010"/><circle cx="304.0" cy="334.6" r="3.5" fill="#101010"/><circle cx="355.0" cy="328.6" r="3.0" fill="#101010"/><circle cx="401.0" cy="320.5" r="3.0" fill="#101010"/><circle cx="443.6" cy="315.6" r="3.0" fill="#101010"/><circle cx="301.8" cy="400.0" r="3.5" fill="#101010"/><circle cx="351.4" cy="389.8" r="3.0" fill="#101010"/><circle cx="245.3" cy="410.3" r="3.5" fill="#101010"/><circle cx="183.7" cy="423.0" r="3.5" fill="#101010"/><circle cx="298.3" cy="464.4" r="3.5" fill="#101010"/><circle cx="348.0" cy="452.4" r="3.5" fill="#101010"/><circle cx="243.6" cy="478.0" r="3.5" fill="#101010"/><circle cx="182.0" cy="494.0" r="3.5" fill="#101010"/><circle cx="394.0" cy="441.0" r="3.0" fill="#101010"/><circle cx="431.8" cy="484.0" r="3.0" fill="#101010"/><circle cx="295.0" cy="526.7" r="3.5" fill="#101010"/><circle cx="344.5" cy="511.3" r="3.5" fill="#101010"/><circle cx="242.0" cy="543.8" r="3.5" fill="#101010"/><circle cx="390.7" cy="497.6" r="3.0" fill="#101010"/><circle cx="428.3" cy="538.6" r="3.0" fill="#101010"/><circle cx="464.0" cy="523.0" r="3.0" fill="#101010"/><circle cx="291.5" cy="588.0" r="3.5" fill="#101010"/><circle cx="342.8" cy="569.4" r="3.5" fill="#101010"/><circle cx="180.3" cy="562.6" r="3.5" fill="#101010"/><circle cx="387.3" cy="551.6" r="3.0" fill="#101010"/><circle cx="477.0" cy="311.0" r="3.0" fill="#101010"/><circle cx="471.0" cy="199.0" r="3.0" fill="#101010"/><circle cx="534.7" cy="199.5" r="3.3" fill="#0a0a0a"/><circle cx="582.4" cy="205.5" r="3.3" fill="#0a0a0a"/><circle cx="634.0" cy="212.8" r="3.3" fill="#0a0a0a"/><circle cx="689.8" cy="219.5" r="3.3" fill="#0a0a0a"/><circle cx="750.0" cy="226.8" r="4.2" fill="#0a0a0a"/><circle cx="816.0" cy="235.5" r="4.2" fill="#0a0a0a"/><circle cx="887.6" cy="244.5" r="4.2" fill="#0a0a0a"/><circle cx="826.0" cy="166.0" r="4.2" fill="#0a0a0a"/><circle cx="899.0" cy="171.0" r="4.2" fill="#0a0a0a"/><circle cx="529.0" cy="256.8" r="3.3" fill="#0a0a0a"/><circle cx="576.4" cy="264.9" r="3.3" fill="#0a0a0a"/><circle cx="627.4" cy="273.5" r="3.3" fill="#0a0a0a"/><circle cx="682.5" cy="282.9" r="3.3" fill="#0a0a0a"/><circle cx="740.8" cy="293.5" r="3.3" fill="#0a0a0a"/><circle cx="805.0" cy="304.5" r="4.2" fill="#0a0a0a"/><circle cx="875.0" cy="316.0" r="4.2" fill="#0a0a0a"/><circle cx="524.0" cy="313.0" r="3.3" fill="#0a0a0a"/><circle cx="620.8" cy="334.0" r="3.3" fill="#0a0a0a"/><circle cx="672.5" cy="344.6" r="3.3" fill="#0a0a0a"/><circle cx="732.5" cy="358.0" r="3.3" fill="#0a0a0a"/><circle cx="794.0" cy="371.0" r="4.2" fill="#0a0a0a"/><circle cx="864.0" cy="386.0" r="4.2" fill="#0a0a0a"/><circle cx="518.6" cy="368.6" r="3.3" fill="#0a0a0a"/><circle cx="513.5" cy="422.0" r="3.3" fill="#0a0a0a"/><circle cx="558.0" cy="435.0" r="3.3" fill="#0a0a0a"/><circle cx="607.6" cy="449.7" r="3.3" fill="#0a0a0a"/><circle cx="666.7" cy="406.0" r="3.3" fill="#0a0a0a"/><circle cx="723.9" cy="421.6" r="3.3" fill="#0a0a0a"/><circle cx="787.0" cy="437.7" r="4.2" fill="#0a0a0a"/><circle cx="852.9" cy="454.8" r="4.2" fill="#0a0a0a"/><circle cx="508.0" cy="474.0" r="3.3" fill="#0a0a0a"/><circle cx="553.8" cy="490.0" r="3.3" fill="#0a0a0a"/><circle cx="600.7" cy="506.0" r="3.3" fill="#0a0a0a"/><circle cx="658.9" cy="466.0" r="3.3" fill="#0a0a0a"/><circle cx="715.0" cy="482.0" r="3.3" fill="#0a0a0a"/><circle cx="776.0" cy="501.7" r="4.2" fill="#0a0a0a"/><circle cx="842.6" cy="520.8" r="4.2" fill="#0a0a0a"/><circle cx="504.0" cy="525.0" r="3.3" fill="#0a0a0a"/><circle cx="547.7" cy="542.0" r="3.3" fill="#0a0a0a"/><circle cx="595.6" cy="560.9" r="3.3" fill="#0a0a0a"/><circle cx="652.0" cy="523.0" r="3.3" fill="#0a0a0a"/><circle cx="707.8" cy="542.0" r="3.3" fill="#0a0a0a"/><circle cx="766.6" cy="563.0" r="4.2" fill="#0a0a0a"/><circle cx="831.6" cy="586.5" r="4.2" fill="#0a0a0a"/><circle cx="644.5" cy="579.0" r="3.3" fill="#0a0a0a"/><ellipse cx="397.6" cy="383.0" rx="7.5" ry="9.5" fill="none" stroke="#111" stroke-width="3.200"/><ellipse cx="438.6" cy="371.0" rx="6.5" ry="9.5" fill="none" stroke="#111" stroke-width="3.200"/><ellipse cx="433.5" cy="429.0" rx="6.5" ry="9.5" fill="none" stroke="#111" stroke-width="3.200"/><ellipse cx="570.5" cy="321.0" rx="8.5" ry="10.5" fill="none" stroke="#111" stroke-width="3.200"/><ellipse cx="564.8" cy="379.5" rx="8.5" ry="9.5" fill="none" stroke="#111" stroke-width="3.200"/><ellipse cx="614.4" cy="392.0" rx="8.5" ry="10.5" fill="none" stroke="#111" stroke-width="3.200"/><path d="M902 322L857 593M889 320h22M847 588l22 8" stroke="#111" stroke-width="1.500" fill="none"/><text transform="translate(889 438) rotate(99)" font-family="Liberation Sans, sans-serif" font-size="9" fill="#222">50 мм</text></svg>
</div><svg width="940" height="700" style="position:absolute;left:0;top:0" fill="none"><path d="M127.3 0V700M186.1 0V700M440.0 0V700M499.0 0V700M753.2 0V700M812.1 0V700M0 88.0H940M0 145.8H940M0 320.8H940M0 379.5H940M0 554.2H940M0 613.0H940" stroke="#2a4fe0" stroke-width="2.200"/><path d="M156.0 0V700M469.0 0V700M782.0 0V700M0 117.0H940M0 350.6H940M0 583.6H940" stroke="#1a1a1a" stroke-width="1.700"/><path d="M156.0 0V700M469.0 0V700M782.0 0V700M0 117.0H940M0 350.6H940M0 583.6H940" stroke="#e4e4e4" stroke-width="1.700" stroke-dasharray="3 3"/><g stroke="#f40808" stroke-width="1.900" stroke-linejoin="round"><polyline points="127.3,0.5 127.3,1.5 127.3,2.5 127.3,3.5 127.3,4.5 127.3,5.5 127.3,6.5 127.3,7.5 127.3,8.5 127.3,9.5 127.3,10.5 127.3,11.5 127.3,12.5 127.3,13.5 127.3,14.5 127.3,15.5 127.3,16.5 127.3,17.5 127.3,18.5 127.3,19.5 127.3,20.5 127.3,21.5 127.3,22.5 127.3,23.5 127.3,24.5 127.3,25.5 127.3,26.5 127.3,27.5 127.3,28.5 127.3,29.5 127.3,30.5 127.3,31.5 127.3,32.5 127.3,33.5 127.3,34.5 127.3,35.5 127.3,36.5 127.3,37.5 127.3,38.5 127.3,39.5 127.3,40.5 127.3,41.5 127.3,42.5 127.3,43.5 127.3,44.5 127.3,45.5 127.3,46.5 127.3,47.5 127.3,48.5 127.3,49.5 127.3,50.5 127.3,51.5 127.3,52.5 127.3,53.5 127.3,54.5 127.3,55.5 127.3,56.5 127.3,57.5 127.3,58.5 127.3,59.5 127.3,60.5 127.3,61.5 127.3,62.5 127.3,63.5 127.3,64.5 127.3,65.5 127.3,66.5 127.3,67.5 127.3,68.5 127.3,69.5 127.3,70.5 127.3,71.5 127.3,72.5 127.3,73.5 127.3,74.5 127.3,75.5 127.3,76.5 127.3,77.5 127.3,78.5 127.3,79.5 127.3,80.5 127.3,81.5 127.3,82.5 127.3,83.5 127.3,84.5 127.3,85.5 127.3,86.5 127.3,87.5 127.3,88.5 127.3,89.5 127.3,90.5 127.3,91.5 127.3,92.5 127.3,93.5 127.3,94.5 127.3,95.5 127.3,96.5 127.3,97.5 127.3,98.5 127.3,99.5 127.3,100.5 127.3,101.5 127.3,102.5 127.3,103.5 127.3,104.5 127.3,105.5 127.3,106.5 127.3,107.5 127.3,108.5 127.3,109.5 127.3,110.5 127.3,111.5 127.3,112.5 127.3,113.5 127.3,114.5 127.3,115.5 127.3,116.5 127.5,117.5 129.3,118.5 136.1,119.5 145.6,120.5 159.1,121.5 168.1,122.5 172.2,123.5 174.7,124.5 174.7,125.5 174.4,126.5 174.5,127.5 173.8,128.5 173.8,129.5 174.2,130.5 175.7,131.5 175.1,132.5 174.1,133.5 174.8,134.5 174.0,135.5 174.0,136.5 174.9,137.5 174.0,138.5 173.3,139.5 173.9,140.5 174.6,141.5 174.5,142.5 175.2,143.5 173.7,144.5 174.7,145.5 174.5,146.5 174.1,147.5 174.8,148.5 174.5,149.5 173.5,150.5 174.8,151.5 173.2,152.5 174.0,153.5 173.9,154.5 174.1,155.5 173.3,156.5 173.7,157.5 173.6,158.5 174.4,159.5 173.1,160.5 173.6,161.5 173.3,162.5 172.5,163.5 175.2,164.5 173.3,165.5 172.3,166.5 174.2,167.5 172.4,168.5 173.3,169.5 173.6,170.5 172.6,171.5 172.7,172.5 172.6,173.5 172.8,174.5 171.8,175.5 172.1,176.5 172.9,177.5 173.8,178.5 173.9,179.5 175.0,180.5 174.7,181.5 173.8,182.5 173.7,183.5 171.9,184.5 172.3,185.5 172.4,186.5 173.8,187.5 174.6,188.5 174.1,189.5 174.0,190.5 173.0,191.5 173.3,192.5 173.1,193.5 173.3,194.5 172.9,195.5 175.4,196.5 175.2,197.5 174.4,198.5 173.7,199.5 173.2,200.5 173.0,201.5 172.8,202.5 173.6,203.5 174.5,204.5 175.3,205.5 175.3,206.5 174.1,207.5 173.8,208.5 172.7,209.5 172.4,210.5 174.6,211.5 173.6,212.5 175.7,213.5 174.3,214.5 174.3,215.5 174.2,216.5 172.9,217.5 173.0,218.5 172.9,219.5 173.4,220.5 174.2,221.5 174.2,222.5 175.9,223.5 174.6,224.5 175.8,225.5 172.7,226.5 174.5,227.5 174.8,228.5 174.2,229.5 175.1,230.5 174.7,231.5 174.0,232.5 174.5,233.5 176.1,234.5 174.3,235.5 174.2,236.5 173.6,237.5 173.8,238.5 172.8,239.5 173.5,240.5 175.2,241.5 174.2,242.5 173.8,243.5 174.1,244.5 174.5,245.5 173.5,246.5 174.4,247.5 173.6,248.5 173.0,249.5 174.0,250.5 171.1,251.5 172.3,252.5 172.8,253.5 171.9,254.5 172.3,255.5 171.9,256.5 171.8,257.5 174.2,258.5 172.9,259.5 172.8,260.5 174.4,261.5 174.0,262.5 175.1,263.5 174.3,264.5 174.4,265.5 171.5,266.5 172.8,267.5 172.8,268.5 172.8,269.5 175.1,270.5 174.0,271.5 175.4,272.5 173.7,273.5 173.0,274.5 172.3,275.5 173.3,276.5 172.3,277.5 174.5,278.5 174.3,279.5 174.6,280.5 173.5,281.5 173.1,282.5 171.5,283.5 173.6,284.5 174.8,285.5 174.1,286.5 174.8,287.5 174.8,288.5 174.6,289.5 174.0,290.5 171.1,291.5 171.7,292.5 172.3,293.5 173.3,294.5 173.6,295.5 174.9,296.5 173.1,297.5 173.7,298.5 172.4,299.5 171.0,300.5 172.0,301.5 173.5,302.5 175.7,303.5 174.5,304.5 174.0,305.5 174.9,306.5 175.1,307.5 174.3,308.5 175.9,309.5 174.8,310.5 174.9,311.5 173.9,312.5 174.4,313.5 174.2,314.5 172.7,315.5 174.4,316.5 172.9,317.5 174.1,318.5 172.9,319.5 175.2,320.5 173.8,321.5 174.0,322.5 173.9,323.5 172.2,324.5 171.3,325.5 172.5,326.5 173.1,327.5 172.4,328.5 172.7,329.5 172.5,330.5 170.6,331.5 171.6,332.5 172.6,333.5 170.7,334.5 169.5,335.5 170.5,336.5 170.1,337.5 170.6,338.5 169.4,339.5 169.8,340.5 167.0,341.5 165.6,342.5 160.1,343.5 154.3,344.5 151.7,345.5 159.2,346.5 166.9,347.5 177.7,348.5 181.9,349.5 182.4,350.5 182.8,351.5 181.6,352.5 181.5,353.5 181.1,354.5 182.1,355.5 181.4,356.5 181.9,357.5 181.5,358.5 181.2,359.5 180.8,360.5 182.6,361.5 182.0,362.5 182.8,363.5 182.6,364.5 181.3,365.5 181.1,366.5 180.7,367.5 183.0,368.5 182.5,369.5 183.3,370.5 181.7,371.5 181.9,372.5 179.8,373.5 181.9,374.5 182.3,375.5 182.4,376.5 179.7,377.5 171.3,378.5 163.7,379.5 160.5,380.5 163.4,381.5 167.2,382.5 173.3,383.5 174.5,384.5 174.1,385.5 171.9,386.5 168.8,387.5 165.7,388.5 166.0,389.5 169.2,390.5 172.6,391.5 173.3,392.5 174.8,393.5 172.7,394.5 169.7,395.5 167.3,396.5 166.0,397.5 168.1,398.5 171.2,399.5 174.8,400.5 175.8,401.5 174.1,402.5 168.8,403.5 166.0,404.5 165.3,405.5 168.1,406.5 171.0,407.5 173.9,408.5 175.0,409.5 173.6,410.5 169.5,411.5 166.4,412.5 164.7,413.5 166.0,414.5 170.3,415.5 173.1,416.5 175.1,417.5 173.2,418.5 170.4,419.5 168.1,420.5 165.1,421.5 162.7,422.5 163.3,423.5 162.5,424.5 161.5,425.5 161.7,426.5 162.8,427.5 163.2,428.5 161.5,429.5 162.5,430.5 162.5,431.5 160.8,432.5 161.5,433.5 161.4,434.5 161.6,435.5 160.5,436.5 161.6,437.5 162.9,438.5 163.4,439.5 164.1,440.5 162.9,441.5 164.8,442.5 164.3,443.5 163.3,444.5 165.2,445.5 164.9,446.5 166.1,447.5 166.3,448.5 167.8,449.5 167.8,450.5 167.9,451.5 169.4,452.5 169.5,453.5 169.9,454.5 172.3,455.5 173.0,456.5 175.0,457.5 176.2,458.5 174.1,459.5 170.0,460.5 165.2,461.5 158.8,462.5 159.8,463.5 164.0,464.5 170.8,465.5 176.6,466.5 176.3,467.5 171.1,468.5 165.0,469.5 159.0,470.5 158.1,471.5 162.1,472.5 168.8,473.5 174.9,474.5 176.5,475.5 173.1,476.5 166.3,477.5 159.3,478.5 157.8,479.5 160.3,480.5 168.1,481.5 174.1,482.5 176.8,483.5 173.9,484.5 166.8,485.5 161.7,486.5 158.0,487.5 158.0,488.5 165.6,489.5 173.4,490.5 175.6,491.5 176.5,492.5 169.5,493.5 161.5,494.5 158.1,495.5 157.9,496.5 162.9,497.5 171.0,498.5 173.2,499.5 175.5,500.5 170.0,501.5 166.1,502.5 162.0,503.5 160.6,504.5 159.9,505.5 158.1,506.5 158.6,507.5 157.4,508.5 156.5,509.5 156.3,510.5 155.3,511.5 155.2,512.5 156.3,513.5 155.5,514.5 156.4,515.5 155.9,516.5 155.0,517.5 154.3,518.5 155.2,519.5 155.9,520.5 156.0,521.5 155.8,522.5 157.6,523.5 156.3,524.5 157.2,525.5 158.7,526.5 160.7,527.5 160.0,528.5 159.7,529.5 161.5,530.5 162.3,531.5 163.3,532.5 163.2,533.5 163.8,534.5 165.1,535.5 166.2,536.5 168.4,537.5 171.0,538.5 172.1,539.5 175.2,540.5 177.1,541.5 176.3,542.5 174.2,543.5 171.3,544.5 169.9,545.5 171.9,546.5 173.9,547.5 176.4,548.5 177.6,549.5 177.8,550.5 176.2,551.5 173.7,552.5 174.3,553.5 174.3,554.5 175.4,555.5 176.6,556.5 177.1,557.5 177.6,558.5 178.7,559.5 174.9,560.5 175.7,561.5 175.9,562.5 175.7,563.5 175.9,564.5 176.8,565.5 175.2,566.5 175.8,567.5 175.5,568.5 173.0,569.5 172.5,570.5 172.8,571.5 173.1,572.5 172.9,573.5 171.9,574.5 170.2,575.5 169.0,576.5 169.2,577.5 169.0,578.5 168.8,579.5 171.8,580.5 175.0,581.5 177.5,582.5 175.1,583.5 171.8,584.5 164.4,585.5 160.7,586.5 161.5,587.5 167.6,588.5 175.0,589.5 176.9,590.5 176.8,591.5 172.4,592.5 163.4,593.5 158.5,594.5 155.0,595.5 159.8,596.5 164.9,597.5 168.1,598.5 167.4,599.5 165.3,600.5 157.8,601.5 151.3,602.5 148.3,603.5 147.6,604.5 152.9,605.5 156.9,606.5 158.2,607.5 157.8,608.5 155.8,609.5 154.7,610.5 150.4,611.5 143.9,612.5 136.2,613.5 130.9,614.5 128.1,615.5 127.3,616.5 127.3,617.5 127.3,618.5 127.3,619.5 127.3,620.5 127.3,621.5 127.3,622.5 127.3,623.5 127.3,624.5 127.3,625.5 127.3,626.5 127.3,627.5 127.3,628.5 127.3,629.5 127.3,630.5 127.3,631.5 127.3,632.5 127.3,633.5 127.3,634.5 127.3,635.5 127.3,636.5 127.3,637.5 127.3,638.5 127.3,639.5 127.3,640.5 127.3,641.5 127.3,642.5 127.3,643.5 127.3,644.5 127.3,645.5 127.3,646.5 127.3,647.5 127.3,648.5 127.3,649.5 127.3,650.5 127.3,651.5 127.3,652.5 127.3,653.5 127.3,654.5 127.3,655.5 127.3,656.5 127.3,657.5 127.3,658.5 127.3,659.5 127.3,660.5 127.3,661.5 127.3,662.5 127.3,663.5 127.3,664.5 127.3,665.5 127.3,666.5 127.3,667.5 127.3,668.5 127.3,669.5 127.3,670.5 127.3,671.5 127.3,672.5 127.3,673.5 127.3,674.5 127.3,675.5 127.3,676.5 127.3,677.5 127.3,678.5 127.3,679.5 127.3,680.5 127.3,681.5 127.3,682.5 127.3,683.5 127.3,684.5 127.3,685.5 127.3,686.5 127.3,687.5 127.3,688.5 127.3,689.5 127.3,690.5 127.3,691.5 127.3,692.5 127.3,693.5 127.3,694.5 127.3,695.5 127.3,696.5 127.3,697.5 127.3,698.5 127.3,699.5"/><polyline points="440.0,0.5 440.0,1.5 440.0,2.5 440.0,3.5 440.0,4.5 440.0,5.5 440.0,6.5 440.0,7.5 440.0,8.5 440.0,9.5 440.0,10.5 440.0,11.5 440.0,12.5 440.0,13.5 440.0,14.5 440.0,15.5 440.0,16.5 440.0,17.5 440.0,18.5 440.0,19.5 440.0,20.5 440.0,21.5 440.0,22.5 440.0,23.5 440.0,24.5 440.0,25.5 440.0,26.5 440.0,27.5 440.0,28.5 440.0,29.5 440.0,30.5 440.0,31.5 440.0,32.5 440.0,33.5 440.0,34.5 440.0,35.5 440.0,36.5 440.0,37.5 440.0,38.5 440.0,39.5 440.0,40.5 440.0,41.5 440.0,42.5 440.0,43.5 440.0,44.5 440.0,45.5 440.0,46.5 440.0,47.5 440.0,48.5 440.0,49.5 440.0,50.5 440.0,51.5 440.0,52.5 440.0,53.5 440.0,54.5 440.0,55.5 440.0,56.5 440.0,57.5 440.0,58.5 440.0,59.5 440.0,60.5 440.0,61.5 440.0,62.5 440.0,63.5 440.0,64.5 440.0,65.5 440.0,66.5 440.0,67.5 440.0,68.5 440.0,69.5 440.0,70.5 440.0,71.5 440.0,72.5 440.0,73.5 440.0,74.5 440.0,75.5 440.0,76.5 440.0,77.5 440.0,78.5 440.0,79.5 440.0,80.5 440.0,81.5 440.0,82.5 440.0,83.5 440.0,84.5 440.0,85.5 440.0,86.5 440.0,87.5 440.0,88.5 440.0,89.5 440.0,90.5 440.0,91.5 440.0,92.5 440.0,93.5 440.0,94.5 440.0,95.5 440.0,96.5 440.0,97.5 440.0,98.5 440.0,99.5 440.0,100.5 440.0,101.5 440.0,102.5 440.0,103.5 440.0,104.5 440.0,105.5 440.0,106.5 440.0,107.5 440.0,108.5 440.0,109.5 440.0,110.5 440.0,111.5 440.0,112.5 440.0,113.5 440.0,114.5 440.0,115.5 440.0,116.5 440.0,117.5 440.0,118.5 440.0,119.5 440.0,120.5 440.0,121.5 440.0,122.5 440.0,123.5 440.0,124.5 440.0,125.5 440.0,126.5 440.0,127.5 440.0,128.5 440.0,129.5 440.0,130.5 440.0,131.5 440.0,132.5 440.0,133.5 440.0,134.5 440.0,135.5 440.0,136.5 440.0,137.5 440.8,138.5 445.7,139.5 454.9,140.5 468.7,141.5 481.1,142.5 490.1,143.5 492.6,144.5 490.7,145.5 486.7,146.5 480.7,147.5 476.3,148.5 479.0,149.5 481.7,150.5 487.7,151.5 489.8,152.5 488.5,153.5 481.6,154.5 476.6,155.5 475.7,156.5 480.2,157.5 485.8,158.5 491.2,159.5 491.4,160.5 490.3,161.5 487.7,162.5 489.3,163.5 486.9,164.5 486.5,165.5 488.1,166.5 488.7,167.5 489.4,168.5 488.5,169.5 489.8,170.5 490.8,171.5 489.2,172.5 489.3,173.5 488.6,174.5 489.9,175.5 490.3,176.5 490.3,177.5 490.3,178.5 490.7,179.5 489.6,180.5 489.9,181.5 488.3,182.5 488.1,183.5 488.4,184.5 487.3,185.5 487.9,186.5 488.1,187.5 487.0,188.5 485.9,189.5 485.6,190.5 486.7,191.5 485.1,192.5 485.6,193.5 483.6,194.5 478.7,195.5 470.6,196.5 459.9,197.5 452.4,198.5 453.1,199.5 457.5,200.5 468.6,201.5 480.0,202.5 488.3,203.5 489.4,204.5 484.6,205.5 477.5,206.5 475.1,207.5 478.5,208.5 484.5,209.5 489.8,210.5 489.6,211.5 484.4,212.5 479.8,213.5 475.7,214.5 476.5,215.5 482.8,216.5 488.2,217.5 489.8,218.5 488.0,219.5 481.0,220.5 476.5,221.5 475.0,222.5 479.8,223.5 486.1,224.5 490.1,225.5 488.0,226.5 483.7,227.5 475.9,228.5 475.2,229.5 478.2,230.5 484.9,231.5 488.7,232.5 489.0,233.5 486.3,234.5 485.7,235.5 481.6,236.5 482.9,237.5 481.2,238.5 483.4,239.5 484.5,240.5 484.9,241.5 485.1,242.5 485.0,243.5 485.3,244.5 486.9,245.5 486.8,246.5 486.8,247.5 487.5,248.5 487.2,249.5 488.9,250.5 489.4,251.5 488.3,252.5 489.2,253.5 490.1,254.5 489.0,255.5 490.8,256.5 490.5,257.5 489.2,258.5 490.0,259.5 490.5,260.5 488.5,261.5 489.8,262.5 489.0,263.5 488.7,264.5 489.1,265.5 488.4,266.5 488.4,267.5 489.7,268.5 491.5,269.5 490.1,270.5 484.4,271.5 477.6,272.5 473.8,273.5 476.5,274.5 482.2,275.5 487.5,276.5 489.8,277.5 487.3,278.5 479.0,279.5 473.4,280.5 473.3,281.5 478.0,282.5 486.4,283.5 488.3,284.5 489.3,285.5 482.0,286.5 475.0,287.5 473.6,288.5 475.6,289.5 484.0,290.5 489.7,291.5 489.5,292.5 485.0,293.5 478.8,294.5 472.8,295.5 474.3,296.5 480.6,297.5 488.2,298.5 489.5,299.5 487.0,300.5 480.8,301.5 472.0,302.5 472.5,303.5 476.3,304.5 483.4,305.5 490.1,306.5 487.9,307.5 484.5,308.5 479.0,309.5 477.1,310.5 475.8,311.5 476.0,312.5 476.8,313.5 477.2,314.5 478.5,315.5 477.7,316.5 478.5,317.5 478.7,318.5 479.6,319.5 479.3,320.5 481.7,321.5 481.3,322.5 482.4,323.5 482.9,324.5 484.3,325.5 484.5,326.5 484.5,327.5 485.0,328.5 485.5,329.5 486.3,330.5 486.6,331.5 487.6,332.5 488.2,333.5 488.0,334.5 487.0,335.5 489.4,336.5 489.9,337.5 488.3,338.5 487.9,339.5 484.8,340.5 481.7,341.5 472.9,342.5 468.6,343.5 465.4,344.5 473.9,345.5 484.1,346.5 491.1,347.5 494.5,348.5 495.7,349.5 494.2,350.5 493.3,351.5 493.2,352.5 493.7,353.5 495.0,354.5 496.1,355.5 494.6,356.5 493.9,357.5 492.7,358.5 494.5,359.5 494.1,360.5 496.3,361.5 493.1,362.5 493.5,363.5 492.2,364.5 494.3,365.5 494.8,366.5 494.6,367.5 495.0,368.5 495.3,369.5 493.4,370.5 493.8,371.5 493.3,372.5 494.1,373.5 494.3,374.5 491.0,375.5 482.9,376.5 479.8,377.5 479.9,378.5 485.0,379.5 484.1,380.5 478.5,381.5 469.4,382.5 466.7,383.5 470.8,384.5 480.0,385.5 485.5,386.5 488.3,387.5 481.8,388.5 472.9,389.5 466.1,390.5 466.6,391.5 474.4,392.5 485.2,393.5 487.4,394.5 485.1,395.5 478.4,396.5 468.5,397.5 467.9,398.5 471.7,399.5 480.1,400.5 486.6,401.5 486.2,402.5 480.6,403.5 473.4,404.5 468.7,405.5 469.5,406.5 476.5,407.5 482.5,408.5 487.3,409.5 484.6,410.5 482.9,411.5 481.9,412.5 480.4,413.5 479.9,414.5 480.4,415.5 481.5,416.5 483.6,417.5 484.1,418.5 484.3,419.5 486.0,420.5 483.3,421.5 483.1,422.5 482.9,423.5 483.1,424.5 483.3,425.5 483.2,426.5 484.4,427.5 485.0,428.5 485.3,429.5 484.4,430.5 487.0,431.5 485.6,432.5 485.3,433.5 485.2,434.5 484.1,435.5 484.2,436.5 484.8,437.5 484.6,438.5 485.3,439.5 485.0,440.5 485.9,441.5 485.8,442.5 486.5,443.5 486.9,444.5 486.3,445.5 485.2,446.5 485.7,447.5 485.4,448.5 485.8,449.5 485.0,450.5 485.1,451.5 485.2,452.5 488.1,453.5 486.4,454.5 486.5,455.5 487.1,456.5 485.9,457.5 487.9,458.5 487.5,459.5 487.9,460.5 487.1,461.5 487.6,462.5 488.7,463.5 488.9,464.5 490.4,465.5 489.4,466.5 487.5,467.5 489.0,468.5 488.8,469.5 489.9,470.5 489.3,471.5 489.7,472.5 489.3,473.5 490.0,474.5 490.7,475.5 489.4,476.5 488.5,477.5 489.3,478.5 491.2,479.5 490.3,480.5 490.1,481.5 489.8,482.5 491.3,483.5 490.9,484.5 490.7,485.5 490.5,486.5 490.8,487.5 490.8,488.5 491.5,489.5 492.1,490.5 490.0,491.5 490.4,492.5 491.4,493.5 491.6,494.5 490.5,495.5 491.2,496.5 491.4,497.5 491.5,498.5 491.6,499.5 491.9,500.5 492.6,501.5 492.6,502.5 492.5,503.5 492.3,504.5 491.6,505.5 491.8,506.5 492.7,507.5 492.3,508.5 492.8,509.5 492.5,510.5 492.4,511.5 492.6,512.5 491.3,513.5 492.2,514.5 491.9,515.5 492.9,516.5 491.9,517.5 492.5,518.5 491.9,519.5 492.2,520.5 492.1,521.5 491.3,522.5 491.4,523.5 491.7,524.5 492.3,525.5 491.8,526.5 492.2,527.5 491.9,528.5 491.5,529.5 492.3,530.5 492.4,531.5 491.5,532.5 493.1,533.5 491.5,534.5 492.5,535.5 492.2,536.5 490.6,537.5 491.8,538.5 490.7,539.5 491.7,540.5 492.2,541.5 493.0,542.5 492.2,543.5 490.5,544.5 491.3,545.5 492.6,546.5 491.7,547.5 492.7,548.5 490.9,549.5 491.0,550.5 490.4,551.5 491.0,552.5 492.2,553.5 490.6,554.5 491.8,555.5 491.4,556.5 491.6,557.5 490.8,558.5 491.0,559.5 492.4,560.5 490.0,561.5 491.3,562.5 491.8,563.5 491.0,564.5 491.8,565.5 488.5,566.5 490.3,567.5 489.5,568.5 490.0,569.5 490.1,570.5 490.5,571.5 489.5,572.5 490.6,573.5 488.8,574.5 490.4,575.5 489.5,576.5 488.3,577.5 488.1,578.5 487.9,579.5 488.2,580.5 488.9,581.5 489.5,582.5 489.0,583.5 486.8,584.5 483.1,585.5 476.9,586.5 464.4,587.5 453.0,588.5 444.6,589.5 440.8,590.5 440.0,591.5 440.0,592.5 440.0,593.5 440.0,594.5 440.0,595.5 440.0,596.5 440.0,597.5 440.0,598.5 440.0,599.5 440.0,600.5 440.0,601.5 440.0,602.5 440.0,603.5 440.0,604.5 440.0,605.5 440.0,606.5 440.0,607.5 440.0,608.5 440.0,609.5 440.0,610.5 440.0,611.5 440.0,612.5 440.0,613.5 440.0,614.5 440.0,615.5 440.0,616.5 440.0,617.5 440.0,618.5 440.0,619.5 440.0,620.5 440.0,621.5 440.0,622.5 440.0,623.5 440.0,624.5 440.0,625.5 440.0,626.5 440.0,627.5 440.0,628.5 440.0,629.5 440.0,630.5 440.0,631.5 440.0,632.5 440.0,633.5 440.0,634.5 440.0,635.5 440.0,636.5 440.0,637.5 440.0,638.5 440.0,639.5 440.0,640.5 440.0,641.5 440.0,642.5 440.0,643.5 440.0,644.5 440.0,645.5 440.0,646.5 440.0,647.5 440.0,648.5 440.0,649.5 440.0,650.5 440.0,651.5 440.0,652.5 440.0,653.5 440.0,654.5 440.0,655.5 440.0,656.5 440.0,657.5 440.0,658.5 440.0,659.5 440.0,660.5 440.0,661.5 440.0,662.5 440.0,663.5 440.0,664.5 440.0,665.5 440.0,666.5 440.0,667.5 440.0,668.5 440.0,669.5 440.0,670.5 440.0,671.5 440.0,672.5 440.0,673.5 440.0,674.5 440.0,675.5 440.0,676.5 440.0,677.5 440.0,678.5 440.0,679.5 440.0,680.5 440.0,681.5 440.0,682.5 440.0,683.5 440.0,684.5 440.0,685.5 440.0,686.5 440.0,687.5 440.0,688.5 440.0,689.5 440.0,690.5 440.0,691.5 440.0,692.5 440.0,693.5 440.0,694.5 440.0,695.5 440.0,696.5 440.0,697.5 440.0,698.5 440.0,699.5"/><polyline points="753.2,0.5 753.2,1.5 753.2,2.5 753.2,3.5 753.2,4.5 753.2,5.5 753.2,6.5 753.2,7.5 753.2,8.5 753.2,9.5 753.2,10.5 753.2,11.5 753.2,12.5 753.2,13.5 753.2,14.5 753.2,15.5 753.2,16.5 753.2,17.5 753.2,18.5 753.2,19.5 753.2,20.5 753.2,21.5 753.2,22.5 753.2,23.5 753.2,24.5 753.2,25.5 753.2,26.5 753.2,27.5 753.2,28.5 753.2,29.5 753.2,30.5 753.2,31.5 753.2,32.5 753.2,33.5 753.2,34.5 753.2,35.5 753.2,36.5 753.2,37.5 753.2,38.5 753.2,39.5 753.2,40.5 753.2,41.5 753.2,42.5 753.2,43.5 753.2,44.5 753.2,45.5 753.2,46.5 753.2,47.5 753.2,48.5 753.2,49.5 753.2,50.5 753.2,51.5 753.2,52.5 753.2,53.5 753.2,54.5 753.2,55.5 753.2,56.5 753.2,57.5 753.2,58.5 753.2,59.5 753.2,60.5 753.2,61.5 753.2,62.5 753.2,63.5 753.2,64.5 753.2,65.5 753.2,66.5 753.2,67.5 753.2,68.5 753.2,69.5 753.2,70.5 753.2,71.5 753.2,72.5 753.2,73.5 753.2,74.5 753.2,75.5 753.2,76.5 753.2,77.5 753.2,78.5 753.2,79.5 753.2,80.5 753.2,81.5 753.2,82.5 753.2,83.5 753.2,84.5 753.2,85.5 753.2,86.5 753.2,87.5 753.2,88.5 753.2,89.5 753.2,90.5 753.2,91.5 753.2,92.5 753.2,93.5 753.2,94.5 753.2,95.5 753.2,96.5 753.2,97.5 753.2,98.5 753.2,99.5 753.2,100.5 753.2,101.5 753.2,102.5 753.2,103.5 753.2,104.5 753.2,105.5 753.2,106.5 753.2,107.5 753.2,108.5 753.2,109.5 753.2,110.5 753.2,111.5 753.2,112.5 753.2,113.5 753.2,114.5 753.2,115.5 753.2,116.5 753.2,117.5 753.2,118.5 753.2,119.5 753.2,120.5 753.2,121.5 753.2,122.5 753.2,123.5 753.2,124.5 753.2,125.5 753.2,126.5 753.2,127.5 753.2,128.5 753.2,129.5 753.2,130.5 753.2,131.5 753.2,132.5 753.2,133.5 753.2,134.5 753.2,135.5 753.2,136.5 753.2,137.5 753.2,138.5 753.2,139.5 753.2,140.5 753.2,141.5 753.2,142.5 753.2,143.5 753.2,144.5 753.2,145.5 753.2,146.5 753.2,147.5 753.2,148.5 753.2,149.5 753.2,150.5 753.2,151.5 753.2,152.5 753.2,153.5 753.2,154.5 753.2,155.5 753.2,156.5 753.2,157.5 753.2,158.5 753.2,159.5 753.4,160.5 755.2,161.5 760.9,162.5 772.3,163.5 785.5,164.5 795.3,165.5 800.6,166.5 801.2,167.5 801.0,168.5 797.9,169.5 799.4,170.5 799.4,171.5 799.6,172.5 800.7,173.5 801.2,174.5 800.1,175.5 798.9,176.5 798.9,177.5 798.7,178.5 799.1,179.5 800.1,180.5 800.4,181.5 800.9,182.5 801.2,183.5 800.7,184.5 801.5,185.5 800.5,186.5 800.1,187.5 800.1,188.5 799.9,189.5 800.4,190.5 801.6,191.5 799.6,192.5 801.0,193.5 800.7,194.5 801.3,195.5 800.4,196.5 801.3,197.5 800.5,198.5 801.2,199.5 799.4,200.5 801.1,201.5 801.3,202.5 799.7,203.5 801.3,204.5 800.0,205.5 801.5,206.5 800.8,207.5 801.3,208.5 801.1,209.5 800.0,210.5 801.9,211.5 801.7,212.5 800.3,213.5 801.4,214.5 801.1,215.5 799.6,216.5 798.5,217.5 799.6,218.5 798.7,219.5 800.5,220.5 801.8,221.5 800.9,222.5 799.4,223.5 799.8,224.5 797.8,225.5 798.4,226.5 801.9,227.5 800.0,228.5 800.8,229.5 799.2,230.5 799.0,231.5 798.8,232.5 797.3,233.5 799.5,234.5 801.0,235.5 801.2,236.5 800.1,237.5 798.4,238.5 799.0,239.5 798.8,240.5 799.5,241.5 800.6,242.5 802.2,243.5 799.3,244.5 799.8,245.5 798.9,246.5 798.1,247.5 799.4,248.5 800.6,249.5 800.6,250.5 801.0,251.5 799.9,252.5 799.7,253.5 801.1,254.5 800.3,255.5 799.7,256.5 800.3,257.5 801.5,258.5 799.8,259.5 799.2,260.5 800.9,261.5 801.6,262.5 801.1,263.5 799.2,264.5 798.7,265.5 800.9,266.5 799.9,267.5 800.4,268.5 799.9,269.5 801.1,270.5 800.0,271.5 799.6,272.5 799.9,273.5 799.0,274.5 799.9,275.5 799.7,276.5 798.2,277.5 798.9,278.5 798.8,279.5 798.6,280.5 800.0,281.5 800.7,282.5 800.5,283.5 799.6,284.5 799.3,285.5 800.4,286.5 798.6,287.5 798.1,288.5 797.5,289.5 798.0,290.5 802.0,291.5 800.3,292.5 799.8,293.5 798.0,294.5 799.0,295.5 797.9,296.5 799.0,297.5 800.2,298.5 800.6,299.5 800.9,300.5 797.3,301.5 798.0,302.5 797.2,303.5 798.4,304.5 799.6,305.5 801.0,306.5 799.2,307.5 798.3,308.5 797.8,309.5 796.8,310.5 798.0,311.5 800.1,312.5 800.7,313.5 800.0,314.5 798.8,315.5 796.7,316.5 797.6,317.5 797.2,318.5 798.3,319.5 800.6,320.5 799.1,321.5 798.2,322.5 797.4,323.5 797.2,324.5 796.0,325.5 795.9,326.5 795.8,327.5 796.2,328.5 795.5,329.5 795.9,330.5 796.5,331.5 795.4,332.5 795.2,333.5 794.8,334.5 794.8,335.5 794.5,336.5 794.5,337.5 794.7,338.5 795.3,339.5 795.3,340.5 794.7,341.5 795.1,342.5 793.9,343.5 796.1,344.5 796.3,345.5 794.5,346.5 794.8,347.5 794.4,348.5 794.8,349.5 793.8,350.5 793.1,351.5 794.7,352.5 793.7,353.5 795.9,354.5 796.7,355.5 797.0,356.5 794.7,357.5 787.9,358.5 779.6,359.5 778.0,360.5 784.8,361.5 794.6,362.5 802.5,363.5 808.1,364.5 807.4,365.5 808.4,366.5 806.6,367.5 806.5,368.5 805.8,369.5 807.4,370.5 809.1,371.5 809.3,372.5 807.8,373.5 806.7,374.5 805.8,375.5 808.0,376.5 808.6,377.5 808.3,378.5 808.4,379.5 806.0,380.5 807.6,381.5 806.9,382.5 807.9,383.5 808.5,384.5 806.9,385.5 806.4,386.5 806.4,387.5 805.8,388.5 807.6,389.5 807.4,390.5 805.6,391.5 800.8,392.5 792.4,393.5 787.3,394.5 786.8,395.5 788.9,396.5 794.3,397.5 797.8,398.5 800.2,399.5 799.6,400.5 798.2,401.5 796.3,402.5 794.5,403.5 794.2,404.5 797.2,405.5 799.8,406.5 800.5,407.5 798.7,408.5 798.4,409.5 794.1,410.5 794.6,411.5 797.5,412.5 799.1,413.5 801.2,414.5 801.3,415.5 798.7,416.5 796.2,417.5 794.3,418.5 796.2,419.5 798.3,420.5 799.5,421.5 800.1,422.5 799.5,423.5 797.8,424.5 796.3,425.5 796.9,426.5 795.8,427.5 796.1,428.5 796.7,429.5 795.3,430.5 796.9,431.5 796.4,432.5 795.0,433.5 790.0,434.5 786.0,435.5 782.9,436.5 780.8,437.5 781.0,438.5 785.8,439.5 789.2,440.5 793.7,441.5 795.6,442.5 798.5,443.5 798.1,444.5 798.0,445.5 799.0,446.5 799.2,447.5 797.7,448.5 799.2,449.5 799.9,450.5 799.3,451.5 798.4,452.5 799.8,453.5 800.1,454.5 798.6,455.5 800.7,456.5 800.3,457.5 801.6,458.5 803.4,459.5 802.8,460.5 802.3,461.5 799.8,462.5 799.0,463.5 799.1,464.5 800.7,465.5 802.5,466.5 803.1,467.5 802.1,468.5 801.7,469.5 799.9,470.5 800.4,471.5 800.7,472.5 801.4,473.5 802.0,474.5 802.6,475.5 802.8,476.5 800.8,477.5 800.5,478.5 799.8,479.5 800.5,480.5 801.4,481.5 801.1,482.5 802.5,483.5 801.5,484.5 800.4,485.5 800.5,486.5 799.5,487.5 802.2,488.5 800.8,489.5 802.2,490.5 800.9,491.5 800.8,492.5 801.2,493.5 799.3,494.5 801.1,495.5 802.0,496.5 802.8,497.5 802.9,498.5 802.2,499.5 800.4,500.5 799.0,501.5 799.3,502.5 800.3,503.5 801.4,504.5 801.8,505.5 803.2,506.5 801.3,507.5 801.1,508.5 798.5,509.5 798.2,510.5 801.2,511.5 801.5,512.5 801.7,513.5 803.1,514.5 799.7,515.5 799.8,516.5 797.4,517.5 799.0,518.5 800.6,519.5 800.8,520.5 802.6,521.5 801.4,522.5 799.8,523.5 798.2,524.5 798.4,525.5 798.3,526.5 800.4,527.5 803.7,528.5 802.9,529.5 801.5,530.5 797.5,531.5 795.7,532.5 796.2,533.5 798.2,534.5 801.0,535.5 804.0,536.5 801.0,537.5 800.2,538.5 799.3,539.5 797.9,540.5 797.9,541.5 796.7,542.5 796.1,543.5 798.0,544.5 796.6,545.5 795.3,546.5 795.7,547.5 795.7,548.5 794.5,549.5 796.0,550.5 795.4,551.5 794.9,552.5 794.6,553.5 796.0,554.5 794.5,555.5 793.9,556.5 792.8,557.5 793.4,558.5 794.5,559.5 794.9,560.5 792.9,561.5 792.1,562.5 793.4,563.5 793.1,564.5 793.6,565.5 792.4,566.5 792.8,567.5 791.2,568.5 791.5,569.5 791.8,570.5 791.9,571.5 793.2,572.5 795.4,573.5 796.2,574.5 800.8,575.5 799.9,576.5 798.1,577.5 795.3,578.5 789.6,579.5 789.8,580.5 793.1,581.5 798.0,582.5 801.7,583.5 801.8,584.5 797.4,585.5 793.7,586.5 788.7,587.5 788.8,588.5 789.4,589.5 793.2,590.5 793.3,591.5 793.5,592.5 788.4,593.5 784.6,594.5 779.6,595.5 779.5,596.5 780.4,597.5 782.4,598.5 784.5,599.5 784.8,600.5 783.3,601.5 781.5,602.5 778.1,603.5 772.2,604.5 764.5,605.5 757.6,606.5 754.3,607.5 753.3,608.5 753.2,609.5 753.2,610.5 753.2,611.5 753.2,612.5 753.2,613.5 753.2,614.5 753.2,615.5 753.2,616.5 753.2,617.5 753.2,618.5 753.2,619.5 753.2,620.5 753.2,621.5 753.2,622.5 753.2,623.5 753.2,624.5 753.2,625.5 753.2,626.5 753.2,627.5 753.2,628.5 753.2,629.5 753.2,630.5 753.2,631.5 753.2,632.5 753.2,633.5 753.2,634.5 753.2,635.5 753.2,636.5 753.2,637.5 753.2,638.5 753.2,639.5 753.2,640.5 753.2,641.5 753.2,642.5 753.2,643.5 753.2,644.5 753.2,645.5 753.2,646.5 753.2,647.5 753.2,648.5 753.2,649.5 753.2,650.5 753.2,651.5 753.2,652.5 753.2,653.5 753.2,654.5 753.2,655.5 753.2,656.5 753.2,657.5 753.2,658.5 753.2,659.5 753.2,660.5 753.2,661.5 753.2,662.5 753.2,663.5 753.2,664.5 753.2,665.5 753.2,666.5 753.2,667.5 753.2,668.5 753.2,669.5 753.2,670.5 753.2,671.5 753.2,672.5 753.2,673.5 753.2,674.5 753.2,675.5 753.2,676.5 753.2,677.5 753.2,678.5 753.2,679.5 753.2,680.5 753.2,681.5 753.2,682.5 753.2,683.5 753.2,684.5 753.2,685.5 753.2,686.5 753.2,687.5 753.2,688.5 753.2,689.5 753.2,690.5 753.2,691.5 753.2,692.5 753.2,693.5 753.2,694.5 753.2,695.5 753.2,696.5 753.2,697.5 753.2,698.5 753.2,699.5"/><polyline points="0.5,145.8 1.5,145.8 2.5,145.8 3.5,145.8 4.5,145.8 5.5,145.8 6.5,145.8 7.5,145.8 8.5,145.8 9.5,145.8 10.5,145.8 11.5,145.8 12.5,145.8 13.5,145.8 14.5,145.8 15.5,145.8 16.5,145.8 17.5,145.8 18.5,145.8 19.5,145.8 20.5,145.8 21.5,145.8 22.5,145.8 23.5,145.8 24.5,145.8 25.5,145.8 26.5,145.8 27.5,145.8 28.5,145.8 29.5,145.8 30.5,145.8 31.5,145.8 32.5,145.8 33.5,145.8 34.5,145.8 35.5,145.8 36.5,145.8 37.5,145.8 38.5,145.8 39.5,145.8 40.5,145.8 41.5,145.8 42.5,145.8 43.5,145.8 44.5,145.8 45.5,145.8 46.5,145.8 47.5,145.8 48.5,145.8 49.5,145.8 50.5,145.8 51.5,145.8 52.5,145.8 53.5,145.8 54.5,145.8 55.5,145.8 56.5,145.8 57.5,145.8 58.5,145.8 59.5,145.8 60.5,145.8 61.5,145.8 62.5,145.8 63.5,145.8 64.5,145.8 65.5,145.8 66.5,145.8 67.5,145.8 68.5,145.8 69.5,145.8 70.5,145.8 71.5,145.8 72.5,145.8 73.5,145.8 74.5,145.8 75.5,145.8 76.5,145.8 77.5,145.8 78.5,145.8 79.5,145.8 80.5,145.8 81.5,145.8 82.5,145.8 83.5,145.8 84.5,145.8 85.5,145.8 86.5,145.8 87.5,145.8 88.5,145.8 89.5,145.8 90.5,145.8 91.5,145.8 92.5,145.8 93.5,145.8 94.5,145.8 95.5,145.8 96.5,145.8 97.5,145.8 98.5,145.8 99.5,145.8 100.5,145.8 101.5,145.8 102.5,145.8 103.5,145.8 104.5,145.8 105.5,145.8 106.5,145.8 107.5,145.8 108.5,145.8 109.5,145.8 110.5,145.8 111.5,145.8 112.5,145.8 113.5,145.8 114.5,145.8 115.5,145.8 116.5,145.8 117.5,145.8 118.5,145.8 119.5,145.8 120.5,145.8 121.5,145.8 122.5,145.8 123.5,145.8 124.5,145.8 125.5,145.6 126.5,144.8 127.5,143.4 128.5,141.8 129.5,140.7 130.5,140.2 131.5,141.3 132.5,141.4 133.5,142.6 134.5,141.5 135.5,141.9 136.5,142.3 137.5,142.6 138.5,142.9 139.5,143.3 140.5,143.6 141.5,143.9 142.5,144.2 143.5,144.4 144.5,144.6 145.5,144.7 146.5,144.8 147.5,144.9 148.5,145.0 149.5,145.0 150.5,145.1 151.5,145.2 152.5,145.3 153.5,145.4 154.5,145.5 155.5,145.6 156.5,145.6 157.5,145.7 158.5,145.8 159.5,145.8 160.5,145.8 161.5,145.8 162.5,145.8 163.5,145.8 164.5,145.8 165.5,145.8 166.5,145.8 167.5,145.8 168.5,145.8 169.5,145.8 170.5,145.8 171.5,145.8 172.5,145.8 173.5,145.8 174.5,145.8 175.5,145.8 176.5,145.8 177.5,145.8 178.5,145.8 179.5,145.8 180.5,145.8 181.5,145.8 182.5,145.8 183.5,145.8 184.5,145.8 185.5,145.8 186.5,145.8 187.5,145.8 188.5,145.8 189.5,145.8 190.5,145.8 191.5,145.8 192.5,145.8 193.5,145.8 194.5,145.8 195.5,145.8 196.5,145.8 197.5,145.8 198.5,145.8 199.5,145.8 200.5,145.8 201.5,145.8 202.5,145.8 203.5,145.8 204.5,145.8 205.5,145.8 206.5,145.8 207.5,145.8 208.5,145.8 209.5,145.8 210.5,145.8 211.5,145.8 212.5,145.8 213.5,145.8 214.5,145.8 215.5,145.8 216.5,145.8 217.5,145.8 218.5,145.8 219.5,145.8 220.5,145.8 221.5,145.8 222.5,145.8 223.5,145.8 224.5,145.8 225.5,145.8 226.5,145.8 227.5,145.8 228.5,145.8 229.5,145.8 230.5,145.8 231.5,145.8 232.5,145.8 233.5,145.8 234.5,145.8 235.5,145.8 236.5,145.8 237.5,145.8 238.5,145.8 239.5,145.8 240.5,145.8 241.5,145.8 242.5,145.8 243.5,145.8 244.5,145.8 245.5,145.8 246.5,145.8 247.5,145.8 248.5,145.8 249.5,145.8 250.5,145.8 251.5,145.8 252.5,145.8 253.5,145.8 254.5,145.8 255.5,145.8 256.5,145.8 257.5,145.8 258.5,145.8 259.5,145.8 260.5,145.8 261.5,145.8 262.5,145.8 263.5,145.8 264.5,145.8 265.5,145.8 266.5,145.8 267.5,145.8 268.5,145.8 269.5,145.8 270.5,145.8 271.5,145.8 272.5,145.8 273.5,145.8 274.5,145.8 275.5,145.8 276.5,145.8 277.5,145.8 278.5,145.8 279.5,145.8 280.5,145.8 281.5,145.8 282.5,145.8 283.5,145.8 284.5,145.8 285.5,145.8 286.5,145.8 287.5,145.8 288.5,145.8 289.5,145.8 290.5,145.8 291.5,145.8 292.5,145.8 293.5,145.8 294.5,145.8 295.5,145.8 296.5,145.8 297.5,145.8 298.5,145.8 299.5,145.8 300.5,145.8 301.5,145.8 302.5,145.8 303.5,145.8 304.5,145.8 305.5,145.8 306.5,145.8 307.5,145.8 308.5,145.8 309.5,145.8 310.5,145.8 311.5,145.8 312.5,145.8 313.5,145.8 314.5,145.8 315.5,145.8 316.5,145.8 317.5,145.8 318.5,145.8 319.5,145.8 320.5,145.8 321.5,145.8 322.5,145.8 323.5,145.8 324.5,145.8 325.5,145.8 326.5,145.8 327.5,145.8 328.5,145.8 329.5,145.8 330.5,145.8 331.5,145.8 332.5,145.8 333.5,145.8 334.5,145.8 335.5,145.8 336.5,145.8 337.5,145.8 338.5,145.8 339.5,145.8 340.5,145.8 341.5,145.8 342.5,145.8 343.5,145.8 344.5,145.8 345.5,145.8 346.5,145.8 347.5,145.8 348.5,145.8 349.5,145.8 350.5,145.8 351.5,145.8 352.5,145.8 353.5,145.8 354.5,145.8 355.5,145.8 356.5,145.8 357.5,145.8 358.5,145.8 359.5,145.8 360.5,145.8 361.5,145.8 362.5,145.8 363.5,145.8 364.5,145.8 365.5,145.8 366.5,145.8 367.5,145.8 368.5,145.8 369.5,145.8 370.5,145.8 371.5,145.8 372.5,145.8 373.5,145.8 374.5,145.8 375.5,145.8 376.5,145.8 377.5,145.8 378.5,145.8 379.5,145.8 380.5,145.8 381.5,145.8 382.5,145.8 383.5,145.8 384.5,145.8 385.5,145.8 386.5,145.8 387.5,145.8 388.5,145.8 389.5,145.8 390.5,145.8 391.5,145.8 392.5,145.8 393.5,145.8 394.5,145.8 395.5,145.8 396.5,145.8 397.5,145.8 398.5,145.8 399.5,145.8 400.5,145.8 401.5,145.8 402.5,145.8 403.5,145.8 404.5,145.8 405.5,145.8 406.5,145.8 407.5,145.8 408.5,145.8 409.5,145.8 410.5,145.8 411.5,145.8 412.5,145.8 413.5,145.8 414.5,145.8 415.5,145.8 416.5,145.8 417.5,145.8 418.5,145.8 419.5,145.8 420.5,145.8 421.5,145.8 422.5,145.8 423.5,145.8 424.5,145.8 425.5,145.8 426.5,145.8 427.5,145.8 428.5,145.8 429.5,145.8 430.5,145.8 431.5,145.8 432.5,145.8 433.5,145.8 434.5,145.8 435.5,145.8 436.5,145.8 437.5,145.8 438.5,145.8 439.5,145.8 440.5,145.8 441.5,145.8 442.5,145.8 443.5,145.8 444.5,145.8 445.5,145.8 446.5,145.8 447.5,145.8 448.5,145.8 449.5,145.8 450.5,145.8 451.5,145.8 452.5,145.8 453.5,145.8 454.5,145.8 455.5,145.8 456.5,145.8 457.5,145.8 458.5,145.8 459.5,145.8 460.5,145.8 461.5,145.8 462.5,145.8 463.5,145.8 464.5,145.8 465.5,145.8 466.5,145.8 467.5,145.8 468.5,145.8 469.5,145.8 470.5,145.8 471.5,145.8 472.5,145.8 473.5,145.8 474.5,145.8 475.5,145.8 476.5,145.8 477.5,145.8 478.5,145.8 479.5,145.8 480.5,145.8 481.5,145.8 482.5,145.8 483.5,145.8 484.5,145.8 485.5,145.8 486.5,145.8 487.5,145.8 488.5,145.8 489.5,145.8 490.5,145.8 491.5,145.8 492.5,145.8 493.5,145.8 494.5,145.8 495.5,145.8 496.5,145.8 497.5,145.8 498.5,145.8 499.5,145.8 500.5,145.8 501.5,145.8 502.5,145.8 503.5,145.8 504.5,145.8 505.5,145.8 506.5,145.8 507.5,145.8 508.5,145.8 509.5,145.8 510.5,145.8 511.5,145.8 512.5,145.8 513.5,145.8 514.5,145.8 515.5,145.8 516.5,145.8 517.5,145.8 518.5,145.8 519.5,145.8 520.5,145.8 521.5,145.8 522.5,145.8 523.5,145.8 524.5,145.8 525.5,145.8 526.5,145.8 527.5,145.8 528.5,145.8 529.5,145.8 530.5,145.8 531.5,145.8 532.5,145.8 533.5,145.8 534.5,145.8 535.5,145.8 536.5,145.8 537.5,145.8 538.5,145.8 539.5,145.8 540.5,145.8 541.5,145.8 542.5,145.8 543.5,145.8 544.5,145.8 545.5,145.8 546.5,145.8 547.5,145.8 548.5,145.8 549.5,145.8 550.5,145.8 551.5,145.8 552.5,145.8 553.5,145.8 554.5,145.8 555.5,145.8 556.5,145.8 557.5,145.8 558.5,145.8 559.5,145.8 560.5,145.8 561.5,145.8 562.5,145.8 563.5,145.8 564.5,145.8 565.5,145.8 566.5,145.8 567.5,145.8 568.5,145.8 569.5,145.8 570.5,145.8 571.5,145.8 572.5,145.8 573.5,145.8 574.5,145.8 575.5,145.8 576.5,145.8 577.5,145.8 578.5,145.8 579.5,145.8 580.5,145.8 581.5,145.8 582.5,145.8 583.5,145.8 584.5,145.8 585.5,145.8 586.5,145.8 587.5,145.8 588.5,145.8 589.5,145.8 590.5,145.8 591.5,145.8 592.5,145.8 593.5,145.8 594.5,145.8 595.5,145.8 596.5,145.8 597.5,145.8 598.5,145.8 599.5,145.8 600.5,145.8 601.5,145.8 602.5,145.8 603.5,145.8 604.5,145.8 605.5,145.8 606.5,145.8 607.5,145.8 608.5,145.8 609.5,145.8 610.5,145.8 611.5,145.8 612.5,145.8 613.5,145.8 614.5,145.8 615.5,145.8 616.5,145.8 617.5,145.8 618.5,145.8 619.5,145.8 620.5,145.8 621.5,145.8 622.5,145.8 623.5,145.8 624.5,145.8 625.5,145.8 626.5,145.8 627.5,145.8 628.5,145.8 629.5,145.8 630.5,145.8 631.5,145.8 632.5,145.8 633.5,145.8 634.5,145.8 635.5,145.8 636.5,145.8 637.5,145.8 638.5,145.8 639.5,145.8 640.5,145.8 641.5,145.8 642.5,145.8 643.5,145.8 644.5,145.8 645.5,145.8 646.5,145.8 647.5,145.8 648.5,145.8 649.5,145.8 650.5,145.8 651.5,145.8 652.5,145.8 653.5,145.8 654.5,145.8 655.5,145.8 656.5,145.8 657.5,145.8 658.5,145.8 659.5,145.8 660.5,145.8 661.5,145.8 662.5,145.8 663.5,145.8 664.5,145.8 665.5,145.8 666.5,145.8 667.5,145.8 668.5,145.8 669.5,145.8 670.5,145.8 671.5,145.8 672.5,145.8 673.5,145.8 674.5,145.8 675.5,145.8 676.5,145.8 677.5,145.8 678.5,145.8 679.5,145.8 680.5,145.8 681.5,145.8 682.5,145.8 683.5,145.8 684.5,145.8 685.5,145.8 686.5,145.8 687.5,145.8 688.5,145.8 689.5,145.8 690.5,145.8 691.5,145.8 692.5,145.8 693.5,145.8 694.5,145.8 695.5,145.8 696.5,145.8 697.5,145.8 698.5,145.8 699.5,145.8 700.5,145.8 701.5,145.8 702.5,145.8 703.5,145.8 704.5,145.8 705.5,145.8 706.5,145.8 707.5,145.8 708.5,145.8 709.5,145.8 710.5,145.8 711.5,145.8 712.5,145.8 713.5,145.8 714.5,145.8 715.5,145.8 716.5,145.8 717.5,145.8 718.5,145.8 719.5,145.8 720.5,145.8 721.5,145.8 722.5,145.8 723.5,145.8 724.5,145.8 725.5,145.8 726.5,145.8 727.5,145.8 728.5,145.8 729.5,145.8 730.5,145.8 731.5,145.8 732.5,145.8 733.5,145.8 734.5,145.8 735.5,145.8 736.5,145.8 737.5,145.8 738.5,145.8 739.5,145.8 740.5,145.8 741.5,145.8 742.5,145.8 743.5,145.8 744.5,145.8 745.5,145.8 746.5,145.8 747.5,145.8 748.5,145.8 749.5,145.8 750.5,145.8 751.5,145.8 752.5,145.8 753.5,145.8 754.5,145.8 755.5,145.8 756.5,145.8 757.5,145.8 758.5,145.8 759.5,145.8 760.5,145.8 761.5,145.8 762.5,145.8 763.5,145.8 764.5,145.8 765.5,145.8 766.5,145.8 767.5,145.8 768.5,145.8 769.5,145.8 770.5,145.8 771.5,145.8 772.5,145.8 773.5,145.8 774.5,145.8 775.5,145.8 776.5,145.8 777.5,145.8 778.5,145.8 779.5,145.8 780.5,145.8 781.5,145.8 782.5,145.8 783.5,145.8 784.5,145.8 785.5,145.8 786.5,145.8 787.5,145.8 788.5,145.8 789.5,145.8 790.5,145.8 791.5,145.8 792.5,145.8 793.5,145.8 794.5,145.8 795.5,145.8 796.5,145.8 797.5,145.8 798.5,145.8 799.5,145.8 800.5,145.8 801.5,145.8 802.5,145.8 803.5,145.8 804.5,145.8 805.5,145.8 806.5,145.8 807.5,145.8 808.5,145.8 809.5,145.8 810.5,145.8 811.5,145.8 812.5,145.8 813.5,145.8 814.5,145.8 815.5,145.8 816.5,145.8 817.5,145.8 818.5,145.8 819.5,145.8 820.5,145.8 821.5,145.8 822.5,145.8 823.5,145.8 824.5,145.8 825.5,145.8 826.5,145.8 827.5,145.8 828.5,145.8 829.5,145.8 830.5,145.8 831.5,145.8 832.5,145.8 833.5,145.8 834.5,145.8 835.5,145.8 836.5,145.8 837.5,145.8 838.5,145.8 839.5,145.8 840.5,145.8 841.5,145.8 842.5,145.8 843.5,145.8 844.5,145.8 845.5,145.8 846.5,145.8 847.5,145.8 848.5,145.8 849.5,145.8 850.5,145.8 851.5,145.8 852.5,145.8 853.5,145.8 854.5,145.8 855.5,145.8 856.5,145.8 857.5,145.8 858.5,145.8 859.5,145.8 860.5,145.8 861.5,145.8 862.5,145.8 863.5,145.8 864.5,145.8 865.5,145.8 866.5,145.8 867.5,145.8 868.5,145.8 869.5,145.8 870.5,145.8 871.5,145.8 872.5,145.8 873.5,145.8 874.5,145.8 875.5,145.8 876.5,145.8 877.5,145.8 878.5,145.8 879.5,145.8 880.5,145.8 881.5,145.8 882.5,145.8 883.5,145.8 884.5,145.8 885.5,145.8 886.5,145.8 887.5,145.8 888.5,145.8 889.5,145.8 890.5,145.8 891.5,145.8 892.5,145.8 893.5,145.8 894.5,145.8 895.5,145.8 896.5,145.8 897.5,145.8 898.5,145.8 899.5,145.8 900.5,145.8 901.5,145.8 902.5,145.8 903.5,145.8 904.5,145.8 905.5,145.8 906.5,145.8 907.5,145.8 908.5,145.8 909.5,145.8 910.5,145.8 911.5,145.8 912.5,145.8 913.5,145.8 914.5,145.8 915.5,145.8 916.5,145.8 917.5,145.8 918.5,145.8 919.5,145.8 920.5,145.8 921.5,145.8 922.5,145.8 923.5,145.8 924.5,145.8 925.5,145.8 926.5,145.8 927.5,145.8 928.5,145.8 929.5,145.8 930.5,145.8 931.5,145.8 932.5,145.8 933.5,145.8 934.5,145.8 935.5,145.8 936.5,145.8 937.5,145.8 938.5,145.8 939.5,145.8"/><polyline points="0.5,379.5 1.5,379.5 2.5,379.5 3.5,379.5 4.5,379.5 5.5,379.5 6.5,379.5 7.5,379.5 8.5,379.5 9.5,379.5 10.5,379.5 11.5,379.5 12.5,379.5 13.5,379.5 14.5,379.5 15.5,379.5 16.5,379.5 17.5,379.5 18.5,379.5 19.5,379.5 20.5,379.5 21.5,379.5 22.5,379.5 23.5,379.5 24.5,379.5 25.5,379.5 26.5,379.5 27.5,379.5 28.5,379.5 29.5,379.5 30.5,379.5 31.5,379.5 32.5,379.5 33.5,379.5 34.5,379.5 35.5,379.5 36.5,379.5 37.5,379.5 38.5,379.5 39.5,379.5 40.5,379.5 41.5,379.5 42.5,379.5 43.5,379.5 44.5,379.5 45.5,379.5 46.5,379.5 47.5,379.5 48.5,379.5 49.5,379.5 50.5,379.5 51.5,379.5 52.5,379.5 53.5,379.5 54.5,379.5 55.5,379.5 56.5,379.5 57.5,379.5 58.5,379.5 59.5,379.5 60.5,379.5 61.5,379.5 62.5,379.5 63.5,379.5 64.5,379.5 65.5,379.5 66.5,379.5 67.5,379.5 68.5,379.5 69.5,379.5 70.5,379.5 71.5,379.5 72.5,379.5 73.5,379.5 74.5,379.5 75.5,379.5 76.5,379.5 77.5,379.5 78.5,379.5 79.5,379.5 80.5,379.5 81.5,379.5 82.5,379.5 83.5,379.5 84.5,379.5 85.5,379.5 86.5,379.5 87.5,379.5 88.5,379.5 89.5,379.5 90.5,379.5 91.5,379.5 92.5,379.5 93.5,379.5 94.5,379.5 95.5,379.5 96.5,379.5 97.5,379.0 98.5,376.0 99.5,367.9 100.5,354.3 101.5,339.4 102.5,329.7 103.5,326.0 104.5,323.7 105.5,323.3 106.5,324.1 107.5,323.0 108.5,323.6 109.5,325.3 110.5,324.6 111.5,325.1 112.5,324.6 113.5,324.9 114.5,324.2 115.5,323.9 116.5,325.6 117.5,323.8 118.5,324.4 119.5,323.6 120.5,324.5 121.5,325.8 122.5,324.4 123.5,324.0 124.5,324.0 125.5,324.3 126.5,325.0 127.5,324.9 128.5,324.9 129.5,325.0 130.5,324.3 131.5,324.1 132.5,323.8 133.5,324.1 134.5,324.5 135.5,324.0 136.5,324.4 137.5,325.0 138.5,323.8 139.5,324.4 140.5,324.4 141.5,323.5 142.5,324.0 143.5,323.9 144.5,323.0 145.5,323.6 146.5,323.8 147.5,324.3 148.5,325.7 149.5,326.0 150.5,325.0 151.5,322.8 152.5,324.5 153.5,324.7 154.5,324.1 155.5,323.7 156.5,324.2 157.5,324.0 158.5,324.2 159.5,324.8 160.5,324.9 161.5,326.1 162.5,324.6 163.5,324.6 164.5,324.3 165.5,323.9 166.5,325.5 167.5,325.3 168.5,324.1 169.5,325.6 170.5,324.4 171.5,324.5 172.5,324.2 173.5,325.1 174.5,324.2 175.5,325.4 176.5,324.0 177.5,324.6 178.5,324.9 179.5,324.5 180.5,323.7 181.5,325.3 182.5,324.8 183.5,325.5 184.5,324.0 185.5,324.2 186.5,325.3 187.5,324.8 188.5,325.4 189.5,324.7 190.5,324.0 191.5,325.1 192.5,324.7 193.5,325.8 194.5,323.5 195.5,325.5 196.5,324.6 197.5,324.9 198.5,324.0 199.5,324.8 200.5,324.9 201.5,325.6 202.5,323.9 203.5,325.9 204.5,323.6 205.5,323.8 206.5,323.4 207.5,325.3 208.5,325.1 209.5,324.5 210.5,323.9 211.5,325.4 212.5,324.0 213.5,325.6 214.5,324.3 215.5,324.7 216.5,324.6 217.5,324.8 218.5,324.3 219.5,325.9 220.5,324.1 221.5,325.1 222.5,324.9 223.5,325.3 224.5,324.3 225.5,324.5 226.5,325.0 227.5,325.4 228.5,323.5 229.5,324.9 230.5,324.4 231.5,325.0 232.5,324.2 233.5,324.1 234.5,324.3 235.5,323.9 236.5,323.8 237.5,326.4 238.5,325.4 239.5,325.8 240.5,324.5 241.5,324.7 242.5,325.7 243.5,323.8 244.5,324.8 245.5,323.8 246.5,325.4 247.5,324.4 248.5,324.1 249.5,325.2 250.5,324.8 251.5,325.0 252.5,325.3 253.5,324.8 254.5,326.3 255.5,324.6 256.5,325.0 257.5,325.9 258.5,324.6 259.5,326.4 260.5,325.9 261.5,324.3 262.5,324.7 263.5,325.5 264.5,324.1 265.5,325.3 266.5,325.2 267.5,325.1 268.5,324.6 269.5,324.7 270.5,325.7 271.5,325.4 272.5,324.7 273.5,324.3 274.5,324.9 275.5,324.5 276.5,324.6 277.5,325.9 278.5,325.3 279.5,323.7 280.5,325.3 281.5,324.6 282.5,326.0 283.5,323.0 284.5,325.6 285.5,324.7 286.5,324.8 287.5,326.2 288.5,325.3 289.5,324.4 290.5,325.6 291.5,324.6 292.5,325.5 293.5,324.5 294.5,323.8 295.5,326.0 296.5,325.0 297.5,325.7 298.5,325.9 299.5,325.3 300.5,325.2 301.5,325.0 302.5,325.0 303.5,326.8 304.5,325.6 305.5,326.8 306.5,325.2 307.5,324.8 308.5,325.1 309.5,325.6 310.5,325.1 311.5,324.8 312.5,325.0 313.5,325.7 314.5,325.6 315.5,324.5 316.5,325.4 317.5,325.3 318.5,325.4 319.5,325.0 320.5,325.0 321.5,325.6 322.5,325.6 323.5,325.6 324.5,325.3 325.5,325.0 326.5,326.4 327.5,324.4 328.5,326.1 329.5,325.3 330.5,326.1 331.5,325.8 332.5,325.5 333.5,325.1 334.5,325.2 335.5,324.9 336.5,325.7 337.5,324.4 338.5,326.5 339.5,325.3 340.5,325.2 341.5,325.7 342.5,325.5 343.5,326.1 344.5,325.3 345.5,325.8 346.5,325.0 347.5,325.3 348.5,325.3 349.5,325.4 350.5,326.1 351.5,325.0 352.5,324.9 353.5,325.8 354.5,326.3 355.5,326.1 356.5,324.9 357.5,326.7 358.5,325.4 359.5,325.9 360.5,325.1 361.5,326.6 362.5,325.3 363.5,326.3 364.5,325.3 365.5,324.5 366.5,325.8 367.5,324.3 368.5,325.6 369.5,325.2 370.5,324.2 371.5,325.0 372.5,325.4 373.5,327.3 374.5,326.2 375.5,325.5 376.5,326.2 377.5,326.4 378.5,325.4 379.5,326.7 380.5,326.5 381.5,325.3 382.5,324.4 383.5,326.2 384.5,325.6 385.5,325.4 386.5,326.2 387.5,326.3 388.5,325.4 389.5,326.4 390.5,326.2 391.5,324.5 392.5,327.0 393.5,324.4 394.5,324.8 395.5,326.1 396.5,324.9 397.5,325.6 398.5,326.3 399.5,326.1 400.5,326.2 401.5,324.7 402.5,326.6 403.5,326.7 404.5,326.1 405.5,326.3 406.5,324.4 407.5,326.2 408.5,326.4 409.5,326.4 410.5,326.4 411.5,327.3 412.5,325.9 413.5,326.4 414.5,326.1 415.5,325.1 416.5,325.2 417.5,325.4 418.5,326.6 419.5,326.0 420.5,326.4 421.5,326.2 422.5,326.2 423.5,326.5 424.5,325.4 425.5,326.6 426.5,325.1 427.5,325.8 428.5,326.2 429.5,325.8 430.5,326.3 431.5,326.3 432.5,325.4 433.5,326.3 434.5,323.2 435.5,326.9 436.5,327.0 437.5,325.2 438.5,326.5 439.5,326.6 440.5,326.9 441.5,326.3 442.5,326.7 443.5,325.7 444.5,326.6 445.5,326.2 446.5,325.8 447.5,326.1 448.5,326.6 449.5,327.0 450.5,327.3 451.5,327.3 452.5,325.8 453.5,326.7 454.5,326.6 455.5,326.1 456.5,326.0 457.5,325.6 458.5,326.0 459.5,326.4 460.5,327.1 461.5,326.0 462.5,326.3 463.5,326.3 464.5,326.8 465.5,326.1 466.5,325.7 467.5,326.5 468.5,325.9 469.5,326.3 470.5,326.5 471.5,325.4 472.5,326.4 473.5,326.0 474.5,327.3 475.5,325.7 476.5,326.6 477.5,326.4 478.5,326.6 479.5,326.2 480.5,326.7 481.5,327.0 482.5,326.2 483.5,326.2 484.5,326.7 485.5,325.9 486.5,325.6 487.5,326.8 488.5,325.9 489.5,326.2 490.5,329.2 491.5,333.7 492.5,343.1 493.5,352.2 494.5,364.7 495.5,372.7 496.5,376.5 497.5,375.6 498.5,368.8 499.5,356.9 500.5,346.2 501.5,338.9 502.5,342.0 503.5,343.8 504.5,345.5 505.5,345.2 506.5,346.6 507.5,346.0 508.5,348.3 509.5,346.8 510.5,347.6 511.5,346.8 512.5,346.0 513.5,343.3 514.5,339.3 515.5,338.0 516.5,335.6 517.5,335.4 518.5,334.6 519.5,336.1 520.5,337.4 521.5,335.1 522.5,337.4 523.5,336.9 524.5,337.8 525.5,339.8 526.5,337.2 527.5,338.5 528.5,338.1 529.5,339.6 530.5,339.3 531.5,339.2 532.5,340.4 533.5,341.4 534.5,342.2 535.5,342.4 536.5,343.8 537.5,343.0 538.5,342.4 539.5,343.2 540.5,342.4 541.5,340.2 542.5,342.5 543.5,342.9 544.5,345.5 545.5,346.2 546.5,346.2 547.5,344.2 548.5,343.7 549.5,344.6 550.5,346.8 551.5,348.0 552.5,348.8 553.5,350.3 554.5,349.2 555.5,348.6 556.5,347.9 557.5,347.7 558.5,348.7 559.5,349.9 560.5,351.7 561.5,353.7 562.5,353.1 563.5,352.3 564.5,350.5 565.5,350.8 566.5,351.5 567.5,351.0 568.5,353.6 569.5,354.9 570.5,354.8 571.5,355.2 572.5,352.8 573.5,352.3 574.5,353.2 575.5,353.3 576.5,355.1 577.5,356.5 578.5,357.7 579.5,357.1 580.5,356.3 581.5,353.8 582.5,355.4 583.5,354.6 584.5,355.8 585.5,356.5 586.5,356.4 587.5,357.0 588.5,357.9 589.5,358.1 590.5,357.9 591.5,357.1 592.5,356.9 593.5,357.0 594.5,357.0 595.5,357.1 596.5,357.8 597.5,358.8 598.5,358.4 599.5,358.9 600.5,357.6 601.5,358.5 602.5,360.0 603.5,359.8 604.5,359.0 605.5,359.9 606.5,359.4 607.5,360.0 608.5,359.9 609.5,359.7 610.5,360.5 611.5,360.5 612.5,360.3 613.5,359.4 614.5,360.1 615.5,361.3 616.5,359.8 617.5,360.1 618.5,359.6 619.5,359.3 620.5,357.3 621.5,355.0 622.5,349.0 623.5,347.4 624.5,346.4 625.5,348.5 626.5,354.3 627.5,356.7 628.5,355.5 629.5,349.8 630.5,345.3 631.5,341.4 632.5,341.7 633.5,346.2 634.5,352.4 635.5,356.7 636.5,354.5 637.5,349.4 638.5,343.0 639.5,338.1 640.5,339.7 641.5,341.9 642.5,349.5 643.5,351.4 644.5,352.1 645.5,347.5 646.5,341.6 647.5,336.0 648.5,335.2 649.5,339.1 650.5,344.8 651.5,348.5 652.5,349.8 653.5,344.3 654.5,338.4 655.5,334.2 656.5,332.3 657.5,335.3 658.5,341.5 659.5,345.1 660.5,347.4 661.5,342.7 662.5,337.4 663.5,335.3 664.5,332.2 665.5,334.8 666.5,336.0 667.5,339.6 668.5,340.3 669.5,340.0 670.5,340.4 671.5,338.8 672.5,337.3 673.5,338.0 674.5,336.8 675.5,337.2 676.5,335.3 677.5,335.1 678.5,335.7 679.5,335.1 680.5,333.9 681.5,334.0 682.5,334.0 683.5,334.5 684.5,333.0 685.5,332.2 686.5,332.4 687.5,332.8 688.5,331.8 689.5,330.1 690.5,331.6 691.5,332.2 692.5,332.6 693.5,333.1 694.5,331.1 695.5,331.5 696.5,329.4 697.5,330.0 698.5,329.9 699.5,332.9 700.5,333.4 701.5,332.6 702.5,332.5 703.5,329.7 704.5,328.7 705.5,328.0 706.5,329.6 707.5,330.9 708.5,333.8 709.5,334.2 710.5,333.7 711.5,334.6 712.5,333.5 713.5,333.6 714.5,334.5 715.5,336.6 716.5,334.4 717.5,336.8 718.5,336.1 719.5,336.1 720.5,335.6 721.5,337.1 722.5,338.3 723.5,337.7 724.5,337.5 725.5,339.8 726.5,339.1 727.5,339.9 728.5,340.1 729.5,340.7 730.5,340.6 731.5,340.7 732.5,339.6 733.5,342.7 734.5,340.4 735.5,341.8 736.5,342.8 737.5,343.4 738.5,341.6 739.5,344.0 740.5,341.7 741.5,343.8 742.5,341.5 743.5,339.8 744.5,336.4 745.5,332.6 746.5,330.2 747.5,334.1 748.5,338.8 749.5,341.9 750.5,341.6 751.5,339.5 752.5,333.8 753.5,331.0 754.5,331.2 755.5,335.2 756.5,337.4 757.5,340.9 758.5,342.1 759.5,336.3 760.5,335.5 761.5,331.8 762.5,331.0 763.5,334.0 764.5,337.2 765.5,339.2 766.5,341.5 767.5,339.9 768.5,335.3 769.5,332.8 770.5,331.9 771.5,333.7 772.5,336.3 773.5,337.3 774.5,339.7 775.5,336.5 776.5,335.1 777.5,333.0 778.5,333.2 779.5,332.9 780.5,335.2 781.5,336.1 782.5,339.9 783.5,337.9 784.5,335.2 785.5,332.9 786.5,332.0 787.5,332.8 788.5,332.9 789.5,334.0 790.5,334.2 791.5,333.3 792.5,332.5 793.5,333.7 794.5,334.5 795.5,333.5 796.5,333.0 797.5,333.0 798.5,332.0 799.5,333.5 800.5,332.9 801.5,333.1 802.5,331.3 803.5,332.3 804.5,332.8 805.5,333.2 806.5,332.0 807.5,333.6 808.5,331.8 809.5,331.9 810.5,332.2 811.5,332.5 812.5,332.6 813.5,332.1 814.5,332.8 815.5,332.0 816.5,333.7 817.5,331.8 818.5,332.8 819.5,332.0 820.5,332.6 821.5,333.2 822.5,332.9 823.5,333.2 824.5,332.1 825.5,333.4 826.5,333.3 827.5,331.9 828.5,333.0 829.5,334.9 830.5,334.3 831.5,335.6 832.5,333.8 833.5,334.0 834.5,332.0 835.5,332.6 836.5,333.0 837.5,335.4 838.5,335.2 839.5,335.4 840.5,334.1 841.5,333.0 842.5,333.7 843.5,333.0 844.5,333.2 845.5,333.5 846.5,334.4 847.5,334.0 848.5,332.8 849.5,334.1 850.5,331.7 851.5,333.5 852.5,333.0 853.5,334.2 854.5,333.9 855.5,334.2 856.5,332.7 857.5,334.1 858.5,331.8 859.5,332.2 860.5,332.1 861.5,334.0 862.5,333.0 863.5,333.8 864.5,333.1 865.5,332.8 866.5,332.1 867.5,331.7 868.5,333.3 869.5,334.8 870.5,333.7 871.5,333.3 872.5,334.3 873.5,334.1 874.5,334.8 875.5,333.4 876.5,334.5 877.5,333.1 878.5,332.9 879.5,332.3 880.5,332.7 881.5,332.8 882.5,333.4 883.5,332.1 884.5,334.8 885.5,334.3 886.5,332.2 887.5,333.9 888.5,334.2 889.5,333.8 890.5,332.7 891.5,332.5 892.5,332.7 893.5,334.3 894.5,337.4 895.5,342.8 896.5,349.0 897.5,348.8 898.5,345.1 899.5,337.1 900.5,334.0 901.5,333.1 902.5,333.3 903.5,334.4 904.5,331.8 905.5,333.0 906.5,332.5 907.5,332.6 908.5,332.3 909.5,333.5 910.5,332.5 911.5,333.3 912.5,333.7 913.5,333.4 914.5,330.9 915.5,333.3 916.5,333.3 917.5,334.2 918.5,333.6 919.5,333.9 920.5,332.6 921.5,333.7 922.5,333.7 923.5,331.5 924.5,334.8 925.5,333.3 926.5,334.8 927.5,333.2 928.5,333.9 929.5,332.4 930.5,333.0 931.5,332.5 932.5,333.8 933.5,333.3 934.5,333.4 935.5,333.5 936.5,333.9 937.5,338.8 938.5,347.7 939.5,359.6"/><polyline points="0.5,613.0 1.5,613.0 2.5,613.0 3.5,613.0 4.5,613.0 5.5,613.0 6.5,613.0 7.5,613.0 8.5,613.0 9.5,613.0 10.5,613.0 11.5,613.0 12.5,613.0 13.5,613.0 14.5,613.0 15.5,613.0 16.5,613.0 17.5,613.0 18.5,613.0 19.5,613.0 20.5,613.0 21.5,613.0 22.5,613.0 23.5,613.0 24.5,613.0 25.5,613.0 26.5,613.0 27.5,613.0 28.5,613.0 29.5,613.0 30.5,613.0 31.5,613.0 32.5,613.0 33.5,613.0 34.5,613.0 35.5,613.0 36.5,613.0 37.5,613.0 38.5,613.0 39.5,613.0 40.5,613.0 41.5,613.0 42.5,613.0 43.5,613.0 44.5,613.0 45.5,613.0 46.5,613.0 47.5,613.0 48.5,613.0 49.5,613.0 50.5,613.0 51.5,613.0 52.5,613.0 53.5,613.0 54.5,613.0 55.5,613.0 56.5,613.0 57.5,613.0 58.5,613.0 59.5,613.0 60.5,613.0 61.5,613.0 62.5,613.0 63.5,613.0 64.5,613.0 65.5,613.0 66.5,613.0 67.5,613.0 68.5,613.0 69.5,613.0 70.5,613.0 71.5,613.0 72.5,613.0 73.5,613.0 74.5,613.0 75.5,613.0 76.5,612.7 77.5,611.2 78.5,607.4 79.5,597.8 80.5,587.5 81.5,577.9 82.5,568.3 83.5,564.5 84.5,564.9 85.5,566.7 86.5,571.6 87.5,577.2 88.5,579.7 89.5,578.5 90.5,573.6 91.5,565.9 92.5,564.8 93.5,563.1 94.5,565.8 95.5,570.8 96.5,576.8 97.5,576.4 98.5,575.7 99.5,569.2 100.5,566.3 101.5,564.1 102.5,562.4 103.5,566.1 104.5,569.7 105.5,572.8 106.5,575.1 107.5,573.2 108.5,568.4 109.5,564.1 110.5,563.3 111.5,564.0 112.5,564.6 113.5,566.7 114.5,568.5 115.5,567.0 116.5,568.4 117.5,567.4 118.5,567.8 119.5,566.4 120.5,566.0 121.5,566.9 122.5,567.9 123.5,566.6 124.5,566.5 125.5,565.4 126.5,565.7 127.5,564.0 128.5,564.5 129.5,563.7 130.5,565.0 131.5,565.9 132.5,565.9 133.5,564.9 134.5,563.1 135.5,563.3 136.5,562.5 137.5,563.5 138.5,564.3 139.5,567.0 140.5,567.6 141.5,566.2 142.5,565.7 143.5,563.9 144.5,562.4 145.5,562.5 146.5,562.8 147.5,566.4 148.5,569.6 149.5,569.5 150.5,569.1 151.5,566.7 152.5,564.2 153.5,561.4 154.5,561.9 155.5,565.9 156.5,568.7 157.5,570.9 158.5,571.6 159.5,573.0 160.5,573.8 161.5,574.8 162.5,575.7 163.5,575.7 164.5,576.5 165.5,577.7 166.5,578.9 167.5,579.2 168.5,580.1 169.5,580.5 170.5,580.5 171.5,581.3 172.5,581.5 173.5,584.3 174.5,582.6 175.5,585.0 176.5,584.4 177.5,585.3 178.5,585.4 179.5,587.1 180.5,586.6 181.5,588.8 182.5,587.2 183.5,588.9 184.5,586.7 185.5,588.6 186.5,588.2 187.5,588.1 188.5,587.5 189.5,587.9 190.5,587.8 191.5,587.6 192.5,585.3 193.5,580.0 194.5,574.2 195.5,567.2 196.5,565.2 197.5,569.1 198.5,577.5 199.5,586.0 200.5,589.3 201.5,583.0 202.5,574.0 203.5,565.6 204.5,561.2 205.5,566.4 206.5,576.1 207.5,583.3 208.5,589.3 209.5,585.9 210.5,577.1 211.5,567.1 212.5,564.1 213.5,565.3 214.5,573.1 215.5,581.9 216.5,588.4 217.5,587.3 218.5,579.1 219.5,569.9 220.5,564.0 221.5,563.0 222.5,570.9 223.5,580.5 224.5,588.4 225.5,589.1 226.5,581.8 227.5,570.6 228.5,562.5 229.5,563.3 230.5,568.1 231.5,579.0 232.5,587.1 233.5,588.1 234.5,582.9 235.5,572.4 236.5,564.9 237.5,560.8 238.5,562.6 239.5,561.6 240.5,562.7 241.5,563.7 242.5,563.9 243.5,564.4 244.5,564.6 245.5,564.4 246.5,565.8 247.5,565.8 248.5,566.1 249.5,564.8 250.5,567.2 251.5,566.2 252.5,568.6 253.5,571.1 254.5,569.5 255.5,569.9 256.5,569.2 257.5,571.8 258.5,571.5 259.5,573.1 260.5,573.1 261.5,573.8 262.5,575.6 263.5,575.0 264.5,576.1 265.5,577.9 266.5,577.4 267.5,579.4 268.5,579.3 269.5,580.9 270.5,581.9 271.5,581.2 272.5,581.2 273.5,581.0 274.5,578.4 275.5,574.0 276.5,567.0 277.5,566.6 278.5,570.3 279.5,579.6 280.5,588.0 281.5,588.6 282.5,582.9 283.5,575.0 284.5,567.6 285.5,566.2 286.5,571.7 287.5,582.5 288.5,592.2 289.5,596.1 290.5,594.1 291.5,588.7 292.5,583.8 293.5,579.1 294.5,582.3 295.5,586.6 296.5,590.5 297.5,589.2 298.5,581.9 299.5,573.8 300.5,568.6 301.5,570.2 302.5,575.5 303.5,585.3 304.5,589.9 305.5,587.5 306.5,580.7 307.5,573.7 308.5,569.2 309.5,571.5 310.5,577.9 311.5,586.8 312.5,590.9 313.5,584.5 314.5,578.4 315.5,571.9 316.5,569.9 317.5,570.9 318.5,572.4 319.5,574.0 320.5,575.3 321.5,574.7 322.5,574.9 323.5,575.6 324.5,573.0 325.5,575.1 326.5,572.8 327.5,573.6 328.5,574.5 329.5,573.3 330.5,571.5 331.5,573.2 332.5,572.4 333.5,571.1 334.5,573.0 335.5,571.9 336.5,573.6 337.5,572.8 338.5,573.1 339.5,573.1 340.5,573.7 341.5,572.5 342.5,574.7 343.5,572.9 344.5,574.3 345.5,575.3 346.5,574.9 347.5,575.4 348.5,576.4 349.5,577.2 350.5,575.7 351.5,576.3 352.5,575.7 353.5,572.2 354.5,573.4 355.5,578.2 356.5,586.1 357.5,591.0 358.5,593.1 359.5,588.2 360.5,580.9 361.5,576.8 362.5,574.9 363.5,581.6 364.5,588.4 365.5,593.5 366.5,590.2 367.5,587.0 368.5,579.1 369.5,578.6 370.5,580.0 371.5,586.6 372.5,592.5 373.5,594.6 374.5,588.7 375.5,581.9 376.5,577.4 377.5,577.9 378.5,584.7 379.5,590.4 380.5,593.5 381.5,590.8 382.5,585.7 383.5,580.2 384.5,578.9 385.5,583.5 386.5,590.0 387.5,595.0 388.5,593.8 389.5,589.2 390.5,582.5 391.5,581.0 392.5,581.3 393.5,586.7 394.5,590.2 395.5,592.8 396.5,591.7 397.5,591.2 398.5,591.9 399.5,590.8 400.5,589.7 401.5,591.2 402.5,589.7 403.5,590.1 404.5,589.6 405.5,589.8 406.5,588.6 407.5,588.1 408.5,587.0 409.5,587.5 410.5,586.9 411.5,584.7 412.5,585.6 413.5,585.0 414.5,584.9 415.5,585.7 416.5,584.6 417.5,584.2 418.5,585.1 419.5,582.4 420.5,583.9 421.5,583.8 422.5,582.9 423.5,582.3 424.5,581.9 425.5,581.9 426.5,580.5 427.5,581.3 428.5,583.6 429.5,586.9 430.5,591.4 431.5,592.9 432.5,590.7 433.5,587.6 434.5,584.7 435.5,583.8 436.5,586.3 437.5,589.5 438.5,591.7 439.5,589.1 440.5,587.5 441.5,584.3 442.5,583.8 443.5,586.2 444.5,587.7 445.5,589.0 446.5,588.1 447.5,588.2 448.5,586.2 449.5,584.2 450.5,586.4 451.5,588.0 452.5,588.0 453.5,588.2 454.5,585.2 455.5,583.5 456.5,576.5 457.5,571.7 458.5,568.8 459.5,566.6 460.5,563.8 461.5,564.0 462.5,560.7 463.5,561.3 464.5,562.7 465.5,562.0 466.5,562.2 467.5,562.2 468.5,564.1 469.5,565.1 470.5,568.3 471.5,572.8 472.5,578.9 473.5,585.9 474.5,595.0 475.5,602.5 476.5,608.1 477.5,610.7 478.5,609.1 479.5,602.7 480.5,595.2 481.5,589.9 482.5,586.0 483.5,587.5 484.5,588.7 485.5,588.8 486.5,586.3 487.5,582.1 488.5,581.0 489.5,581.4 490.5,583.3 491.5,587.1 492.5,589.4 493.5,591.2 494.5,589.7 495.5,584.9 496.5,582.7 497.5,580.3 498.5,582.4 499.5,585.3 500.5,589.0 501.5,592.6 502.5,592.5 503.5,589.3 504.5,586.2 505.5,581.1 506.5,580.6 507.5,583.9 508.5,586.7 509.5,591.3 510.5,593.1 511.5,592.8 512.5,587.7 513.5,584.5 514.5,578.6 515.5,580.6 516.5,583.8 517.5,589.8 518.5,595.1 519.5,596.7 520.5,592.0 521.5,587.6 522.5,581.3 523.5,579.7 524.5,578.8 525.5,580.3 526.5,581.7 527.5,582.7 528.5,582.3 529.5,582.4 530.5,582.3 531.5,584.3 532.5,583.8 533.5,583.7 534.5,583.0 535.5,584.4 536.5,585.9 537.5,585.3 538.5,586.8 539.5,584.7 540.5,585.9 541.5,585.8 542.5,588.5 543.5,587.1 544.5,588.0 545.5,587.6 546.5,587.2 547.5,588.9 548.5,587.6 549.5,589.0 550.5,588.6 551.5,589.8 552.5,589.7 553.5,589.2 554.5,592.1 555.5,590.1 556.5,590.5 557.5,590.5 558.5,591.0 559.5,592.1 560.5,592.1 561.5,593.0 562.5,591.3 563.5,589.2 564.5,586.6 565.5,582.2 566.5,578.7 567.5,579.2 568.5,584.0 569.5,590.3 570.5,596.5 571.5,595.4 572.5,589.7 573.5,581.9 574.5,578.1 575.5,575.7 576.5,579.8 577.5,587.4 578.5,592.0 579.5,596.1 580.5,593.4 581.5,586.5 582.5,579.0 583.5,575.5 584.5,575.3 585.5,581.0 586.5,589.5 587.5,594.8 588.5,596.6 589.5,590.9 590.5,582.6 591.5,576.4 592.5,574.4 593.5,578.3 594.5,584.2 595.5,591.3 596.5,594.7 597.5,592.7 598.5,586.6 599.5,578.2 600.5,575.1 601.5,574.3 602.5,579.4 603.5,586.9 604.5,591.2 605.5,594.8 606.5,589.3 607.5,582.8 608.5,577.1 609.5,573.5 610.5,576.6 611.5,579.2 612.5,581.7 613.5,583.9 614.5,582.1 615.5,583.1 616.5,582.0 617.5,582.5 618.5,581.4 619.5,580.9 620.5,579.7 621.5,580.3 622.5,580.1 623.5,578.4 624.5,578.8 625.5,579.2 626.5,577.9 627.5,577.4 628.5,576.4 629.5,576.2 630.5,575.7 631.5,575.0 632.5,576.2 633.5,574.7 634.5,574.9 635.5,574.9 636.5,573.9 637.5,574.5 638.5,573.4 639.5,573.9 640.5,572.7 641.5,572.7 642.5,574.4 643.5,573.1 644.5,573.5 645.5,572.4 646.5,571.9 647.5,572.6 648.5,571.7 649.5,571.2 650.5,568.7 651.5,568.2 652.5,568.6 653.5,574.2 654.5,580.8 655.5,589.1 656.5,592.2 657.5,590.1 658.5,582.6 659.5,573.2 660.5,570.4 661.5,570.1 662.5,574.7 663.5,585.8 664.5,591.9 665.5,592.1 666.5,587.7 667.5,577.4 668.5,571.8 669.5,570.2 670.5,572.4 671.5,580.6 672.5,587.5 673.5,591.6 674.5,588.9 675.5,582.3 676.5,573.8 677.5,568.2 678.5,570.3 679.5,574.5 680.5,583.3 681.5,590.0 682.5,592.0 683.5,586.8 684.5,576.4 685.5,570.8 686.5,567.3 687.5,571.1 688.5,580.1 689.5,587.2 690.5,591.3 691.5,588.7 692.5,580.8 693.5,573.8 694.5,567.9 695.5,569.6 696.5,574.0 697.5,578.3 698.5,583.6 699.5,583.9 700.5,585.2 701.5,587.1 702.5,586.8 703.5,587.3 704.5,587.4 705.5,587.1 706.5,587.0 707.5,587.0 708.5,588.5 709.5,588.0 710.5,589.0 711.5,588.8 712.5,588.9 713.5,588.1 714.5,589.7 715.5,589.1 716.5,589.7 717.5,588.6 718.5,588.7 719.5,588.5 720.5,590.4 721.5,589.4 722.5,589.2 723.5,588.7 724.5,589.7 725.5,588.5 726.5,588.4 727.5,588.5 728.5,590.0 729.5,588.7 730.5,586.6 731.5,587.0 732.5,587.0 733.5,585.3 734.5,580.8 735.5,574.6 736.5,570.2 737.5,566.4 738.5,568.1 739.5,575.2 740.5,584.3 741.5,588.9 742.5,584.9 743.5,578.2 744.5,568.3 745.5,564.2 746.5,566.6 747.5,571.3 748.5,579.8 749.5,587.2 750.5,585.2 751.5,580.6 752.5,572.5 753.5,565.8 754.5,564.7 755.5,568.4 756.5,574.4 757.5,582.0 758.5,583.8 759.5,582.6 760.5,575.6 761.5,567.2 762.5,564.6 763.5,566.0 764.5,569.8 765.5,578.0 766.5,584.0 767.5,583.3 768.5,577.5 769.5,570.4 770.5,566.6 771.5,564.8 772.5,568.6 773.5,574.0 774.5,580.0 775.5,581.4 776.5,579.2 777.5,572.4 778.5,567.9 779.5,564.0 780.5,564.7 781.5,565.5 782.5,565.0 783.5,566.4 784.5,566.2 785.5,566.5 786.5,565.1 787.5,565.8 788.5,565.6 789.5,566.7 790.5,566.1 791.5,566.3 792.5,565.9 793.5,565.4 794.5,565.9 795.5,566.4 796.5,564.6 797.5,565.4 798.5,566.9 799.5,567.0 800.5,566.4 801.5,566.8 802.5,566.7 803.5,567.2 804.5,568.0 805.5,567.8 806.5,567.9 807.5,567.7 808.5,568.1 809.5,569.7 810.5,568.5 811.5,567.2 812.5,568.7 813.5,567.3 814.5,568.9 815.5,569.9 816.5,569.5 817.5,568.8 818.5,568.8 819.5,567.4 820.5,566.7 821.5,565.4 822.5,566.9 823.5,570.4 824.5,572.7 825.5,577.2 826.5,582.5 827.5,589.4 828.5,595.1 829.5,600.5 830.5,605.5 831.5,607.3 832.5,607.3 833.5,602.9 834.5,595.9 835.5,587.2 836.5,575.9 837.5,569.4 838.5,564.9 839.5,567.0 840.5,571.1 841.5,574.1 842.5,574.9 843.5,575.7 844.5,573.7 845.5,567.7 846.5,567.0 847.5,567.5 848.5,568.2 849.5,573.1 850.5,574.2 851.5,573.7 852.5,573.2 853.5,570.3 854.5,568.1 855.5,569.2 856.5,572.4 857.5,581.8 858.5,586.5 859.5,585.5 860.5,580.0 861.5,572.2 862.5,568.7 863.5,566.8 864.5,568.6 865.5,570.6 866.5,572.9 867.5,575.1 868.5,574.6 869.5,573.8 870.5,575.1 871.5,574.4 872.5,574.5 873.5,572.8 874.5,573.6 875.5,575.1 876.5,573.1 877.5,572.3 878.5,572.4 879.5,571.9 880.5,572.4 881.5,572.2 882.5,572.7 883.5,572.7 884.5,572.1 885.5,571.0 886.5,570.8 887.5,571.8 888.5,572.0 889.5,570.3 890.5,570.8 891.5,571.5 892.5,570.3 893.5,570.5 894.5,571.2 895.5,570.8 896.5,571.0 897.5,569.1 898.5,569.7 899.5,569.1 900.5,569.4 901.5,569.4 902.5,568.8 903.5,568.1 904.5,568.1 905.5,566.5 906.5,566.6 907.5,567.9 908.5,568.6 909.5,569.5 910.5,569.0 911.5,568.2 912.5,566.4 913.5,565.4 914.5,565.5 915.5,566.9 916.5,568.5 917.5,568.2 918.5,568.9 919.5,568.6 920.5,567.2 921.5,566.6 922.5,566.7 923.5,565.6 924.5,567.3 925.5,568.1 926.5,567.7 927.5,567.4 928.5,567.8 929.5,566.7 930.5,567.5 931.5,567.9 932.5,567.7 933.5,567.1 934.5,568.5 935.5,569.3 936.5,569.8 937.5,573.6 938.5,583.5 939.5,592.6"/></g></svg>
</div>
<div class="abs" style="left:251px;top:964px;width:940px;height:170px;background:linear-gradient(#404040,#5a5a5a)"></div>
<div class="abs" style="left:251px;top:1136px;width:862px;height:27px;background:#222"></div>
<div class="abs" style="left:1115px;top:1136px;width:76px;height:27px;background:#222"></div>
</body></html>
